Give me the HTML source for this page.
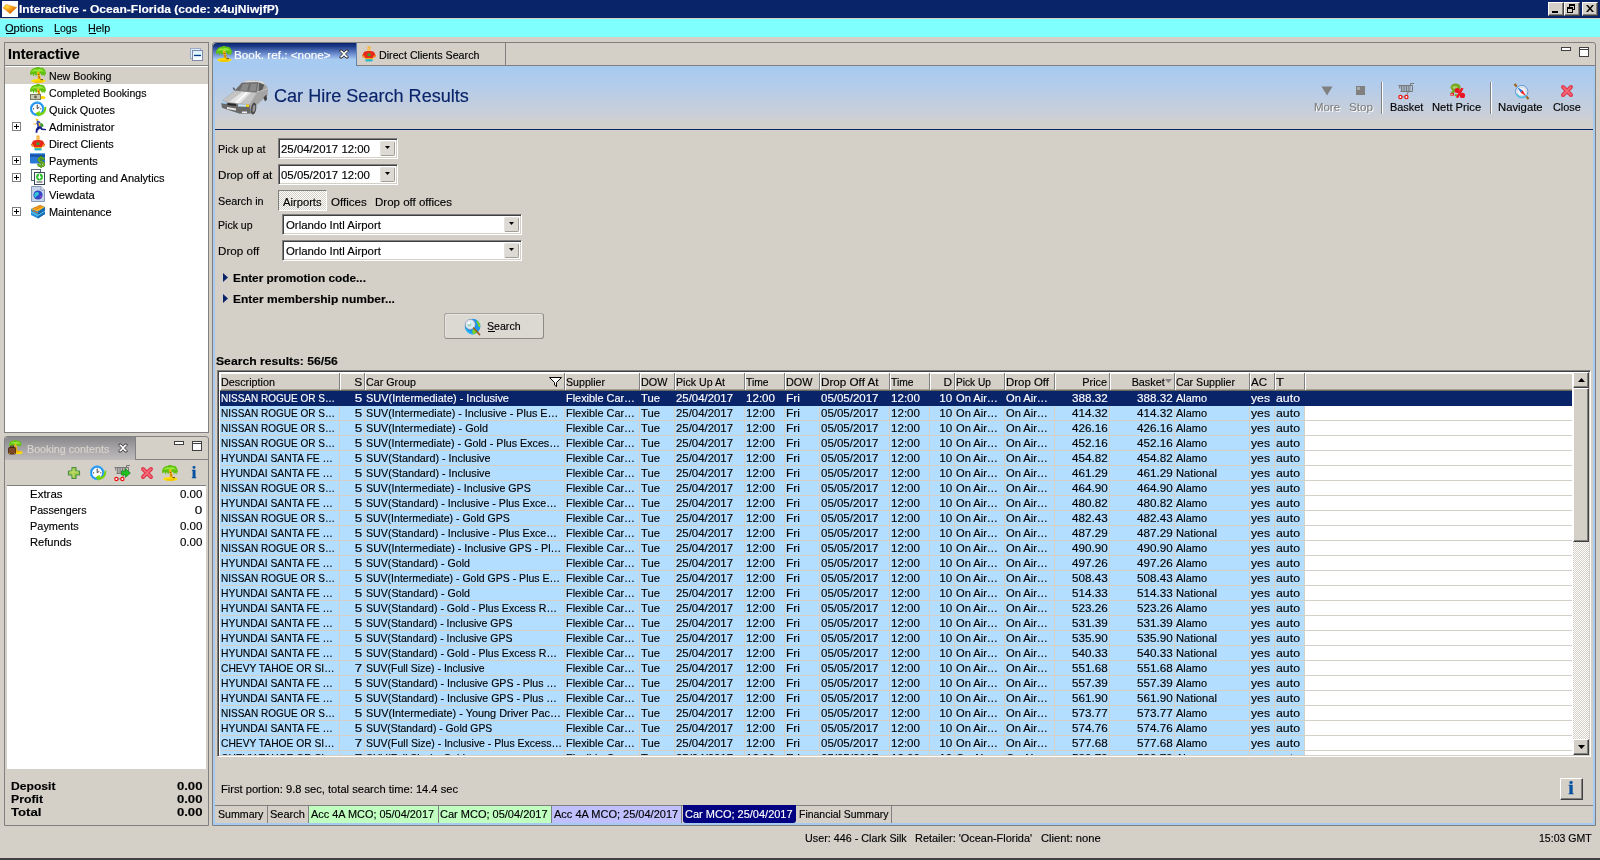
<!DOCTYPE html>
<html><head><meta charset="utf-8"><title>Interactive</title>
<style>
html,body{margin:0;padding:0}
body{width:1600px;height:860px;overflow:hidden;background:#d4d0c8;position:relative;font-family:"Liberation Sans",sans-serif;font-size:11px;color:#000}
div,span.t,svg{position:absolute;box-sizing:border-box}
span.t{white-space:pre;display:block;-webkit-text-stroke:0.15px currentColor}
u{text-decoration:underline}
.sunk{border:1px solid;border-color:#808080 #fff #fff #808080;box-shadow:inset 1px 1px 0 #404040,inset -1px -1px 0 #d4d0c8}
.rais{border:1px solid;border-color:#fff #404040 #404040 #fff;box-shadow:inset -1px -1px 0 #808080;background:#d4d0c8}
.hc{border:1px solid;border-color:#fff #808080 #808080 #fff;background:#d4d0c8}
#w{left:0;top:0;width:1600px;height:860px;will-change:transform}
</style></head><body><div id="w">
<div style="left:0px;top:0px;width:1600px;height:18px;background:#0a246a"></div>
<svg style="left:2px;top:1px" width="16" height="16" viewBox="0 0 16 16"><defs><radialGradient id="gemg" cx="0.3" cy="0.25" r="0.9"><stop offset="0" stop-color="#ffe040"/><stop offset="0.35" stop-color="#f8a818"/><stop offset="0.75" stop-color="#d86808"/><stop offset="1" stop-color="#a84404"/></radialGradient></defs><rect width="16" height="16" fill="#fff"/><path d="M1 6.9 L4 3.4 L14.7 6.4 L8.2 12.7 Z" fill="url(#gemg)" stroke="#e89020" stroke-width=".5" stroke-linejoin="round"/></svg>
<span class="t" style="left:19px;transform-origin:left;top:3px;font-size:11px;line-height:12px;font-weight:700;color:#fff;transform:scaleX(1.095);">Interactive - Ocean-Florida (code: x4ujNiwjfP)</span>
<div class="rais" style="left:1548px;top:2px;width:16px;height:14px"><div style="left:3px;top:8px;width:6px;height:2px;background:#000"></div></div>
<div class="rais" style="left:1564px;top:2px;width:16px;height:14px"><div style="left:4px;top:1px;width:6px;height:6px;border:1px solid #000;border-top-width:2px"></div><div style="left:2px;top:4px;width:6px;height:6px;border:1px solid #000;border-top-width:2px;background:#d4d0c8"></div></div>
<div class="rais" style="left:1582px;top:2px;width:16px;height:14px"><svg style="left:3px;top:2px" width="8" height="7" viewBox="0 0 8 7"><path d="M0 0 L2 0 L4 2.5 L6 0 L8 0 L5 3.5 L8 7 L6 7 L4 4.5 L2 7 L0 7 L3 3.5 Z" fill="#000"/></svg></div>
<div style="left:0px;top:18px;width:1600px;height:1px;background:#d4d0c8"></div>
<div style="left:0px;top:19px;width:1600px;height:18px;background:#80ffff"></div>
<span class="t" style="left:5px;transform-origin:left;top:22px;font-size:11px;line-height:12px;transform:scaleX(1.007);text-decoration:none">Options</span>
<span class="t" style="left:54px;transform-origin:left;top:22px;font-size:11px;line-height:12px;transform:scaleX(0.964);">Logs</span>
<span class="t" style="left:88px;transform-origin:left;top:22px;font-size:11px;line-height:12px;transform:scaleX(0.981);">Help</span>
<div style="left:6px;top:33px;width:8px;height:1px;background:#000"></div>
<div style="left:55px;top:33px;width:5px;height:1px;background:#000"></div>
<div style="left:89px;top:33px;width:7px;height:1px;background:#000"></div>
<div style="left:4px;top:42px;width:205px;height:391px;border:1px solid #808080;background:#d4d0c8"></div>
<div style="left:5px;top:65px;width:203px;height:1px;background:#808080"></div>
<div style="left:5px;top:66px;width:203px;height:366px;background:#fff"></div>
<span class="t" style="left:8px;transform-origin:left;top:47px;font-size:14px;line-height:15px;font-weight:700;transform:scaleX(1.025);">Interactive</span>
<svg style="left:190px;top:48px" width="13" height="13" viewBox="0 0 13 13"><defs><linearGradient id="cag" x1="0" y1="0" x2="0" y2="1"><stop offset="0" stop-color="#d4f2ff"/><stop offset="1" stop-color="#fff"/></linearGradient></defs><rect x="0.5" y="0.5" width="10" height="10" fill="#d8f2ff" stroke="#a0a8c8"/><rect x="2.5" y="2.5" width="10" height="10" fill="url(#cag)" stroke="#8088ac"/><rect x="4" y="6.8" width="7" height="1.3" fill="#004080"/></svg>
<div style="left:5px;top:67px;width:203px;height:17px;background:#d4d0c8"></div>
<span class="t" style="left:49px;transform-origin:left;top:70px;font-size:11px;line-height:12px;transform:scaleX(0.964);">New Booking</span>
<svg style="left:30px;top:67px" width="16" height="16" viewBox="0 0 16 16"><path d="M0 7 C0 3.2 2.8 0.8 5.4 1 C6.6 -0.3 9.6 -0.3 10.8 0.9 C13.8 0.4 16 3.2 16 7.8 L14.9 7 L14.5 9.6 L12.9 7.4 L12.1 9.2 L10.7 6.6 L9.2 7.4 L7.4 6.4 L6.1 9.4 L4.9 6.8 L3.4 9.6 L2.3 6.8 L0.7 8.4 Z" fill="#60c010"/><path d="M1.4 5.2 C2.8 2.2 5.4 1.6 7 2.8 C9 1.2 12.6 1.6 14.8 5.4 C12.6 4 10.4 4 8.8 5.2 C6.4 4 3.8 4 1.4 5.2Z" fill="#98e838"/><path d="M6.6 4.6 L9.2 5 C9.6 7.4 10.8 10 11 13.2 L7.6 13.4 C8.4 10 7.2 7.4 6.6 4.6Z" fill="#f4b810"/><path d="M7.8 7.2l1.4.6M8.4 9.8l1.6.4M8.2 12.2l2 .2" stroke="#a04c08" stroke-width="1.1"/><ellipse cx="8.4" cy="13.9" rx="7.2" ry="2" fill="#ffe000"/><ellipse cx="8.4" cy="14.8" rx="4.6" ry="1" fill="#f4c400"/><rect x="10.4" y="12.2" width="2.6" height="1" fill="#5c3c18"/></svg>
<span class="t" style="left:49px;transform-origin:left;top:87px;font-size:11px;line-height:12px;transform:scaleX(0.96);">Completed Bookings</span>
<svg style="left:30px;top:84px" width="16" height="16" viewBox="0 0 16 16"><path d="M0 7 C0 3.2 2.8 0.8 5.4 1 C6.6 -0.3 9.6 -0.3 10.8 0.9 C13.8 0.4 16 3.2 16 7.8 L14.9 7 L14.5 9.6 L12.9 7.4 L12.1 9.2 L10.7 6.6 L9.2 7.4 L7.4 6.4 L6.1 9.4 L4.9 6.8 L3.4 9.6 L2.3 6.8 L0.7 8.4 Z" fill="#60c010"/><path d="M1.4 5.2 C2.8 2.2 5.4 1.6 7 2.8 C9 1.2 12.6 1.6 14.8 5.4 C12.6 4 10.4 4 8.8 5.2 C6.4 4 3.8 4 1.4 5.2Z" fill="#98e838"/><path d="M6.6 4.6 L9.2 5 C9.6 7.4 10.8 10 11 13.2 L7.6 13.4 C8.4 10 7.2 7.4 6.6 4.6Z" fill="#f4b810"/><path d="M7.8 7.2l1.4.6M8.4 9.8l1.6.4M8.2 12.2l2 .2" stroke="#a04c08" stroke-width="1.1"/><ellipse cx="12" cy="13.5" rx="3.5" ry="1.6" fill="#ffd800"/><rect x="0.5" y="10.5" width="10" height="5" fill="#c8c8b0" stroke="#787860"/><circle cx="5.5" cy="13" r="1.4" fill="#686858"/></svg>
<span class="t" style="left:49px;transform-origin:left;top:104px;font-size:11px;line-height:12px;transform:scaleX(0.99);">Quick Quotes</span>
<svg style="left:30px;top:101px" width="17" height="17" viewBox="0 0 17 17"><circle cx="7.2" cy="7.8" r="6.2" fill="#fff" stroke="#1c8cf0" stroke-width="2.2"/><circle cx="7.2" cy="7.8" r="6.9" fill="none" stroke="#58c0f8" stroke-width=".8"/><path d="M7.2 4.2 V7.8 L9.4 6.2" stroke="#404040" stroke-width="1" fill="none"/><circle cx="3.6" cy="7.8" r=".6" fill="#222"/><circle cx="10.8" cy="7.8" r=".6" fill="#222"/><circle cx="7.2" cy="4" r=".5" fill="#222"/><path d="M16.2 5.2 C17 11 13 15 8.6 14.6 L9.4 16.6 L5.4 12.2 L10 9.8 L9.6 11.8 C12.6 12 14.4 9.6 14.4 6.4 Z" fill="#74d404"/></svg>
<span class="t" style="left:49px;transform-origin:left;top:121px;font-size:11px;line-height:12px;transform:scaleX(1.011);">Administrator</span>
<svg style="left:30px;top:118px" width="16" height="16" viewBox="0 0 16 16"><path d="M5.4 0.4 L8 1 L8.6 2.4 L6.4 3 Z" fill="#f8c818"/><path d="M3.4 5.6 L6 5.4 L6 6.6 L3.6 6.6Z" fill="#f8b020"/><path d="M7 2.6 L10 3.6 L11 8.4 L8 9.4 L6.4 5.4 Z" fill="#3048a8"/><path d="M8.4 4.4 L10 5 L10.6 8.2 L9 8.6Z" fill="#f4c024"/><path d="M10.4 4.6 L13 6 L13.6 8.2 L11 9.4Z" fill="#3c9c2c"/><path d="M7.6 8.6 L11 8.6 L12.4 10.6 L16 11 L16 12.2 L11.6 12 L10 10.4 L7.6 12.4 L7.4 14.8 L5.6 14.8 L5.8 11.6 Z" fill="#141c88"/></svg>
<div style="left:12px;top:122px;width:9px;height:9px;border:1px solid #808080;background:#fff"></div>
<div style="left:14px;top:126px;width:5px;height:1px;background:#000"></div>
<div style="left:16px;top:124px;width:1px;height:5px;background:#000"></div>
<span class="t" style="left:49px;transform-origin:left;top:138px;font-size:11px;line-height:12px;transform:scaleX(0.991);">Direct Clients</span>
<svg style="left:30px;top:135px" width="16" height="16" viewBox="0 0 16 16"><path d="M6.5 0.5 h3 v1.5 h-3z" fill="#f8b020"/><circle cx="8" cy="3.6" r="2" fill="#f8c060"/><path d="M3 6 C5 4.8 11 4.8 13 6 L15 10 L13 12 L12 10.5 L12 13 L4 13 L4 10.5 L3 12 L1 10 Z" fill="#e82818"/><path d="M1 10 L3 12 L3.8 10.8 L2.4 9Z M15 10 L13 12 L12.2 10.8 L13.6 9Z" fill="#f8a020"/><rect x="6.5" y="7.5" width="3" height="2.5" fill="#30a838"/><rect x="4.5" y="13" width="7" height="2.4" fill="#20b8c8"/><rect x="4" y="12.2" width="8" height="1" fill="#f8d020"/></svg>
<span class="t" style="left:49px;transform-origin:left;top:155px;font-size:11px;line-height:12px;transform:scaleX(0.995);">Payments</span>
<svg style="left:30px;top:152px" width="16" height="16" viewBox="0 0 16 16"><rect x="0" y="1" width="15" height="10.5" rx="1" fill="#2878d8"/><rect x="0" y="2.5" width="15" height="2.2" fill="#1850a0"/><rect x="0" y="1" width="15" height="1" fill="#60a8f0"/><text x="7.2" y="15" font-family="Liberation Sans" font-weight="700" font-size="14" fill="#78c020" stroke="#387808" stroke-width=".5">$</text></svg>
<div style="left:12px;top:156px;width:9px;height:9px;border:1px solid #808080;background:#fff"></div>
<div style="left:14px;top:160px;width:5px;height:1px;background:#000"></div>
<div style="left:16px;top:158px;width:1px;height:5px;background:#000"></div>
<span class="t" style="left:49px;transform-origin:left;top:172px;font-size:11px;line-height:12px;">Reporting and Analytics</span>
<svg style="left:30px;top:169px" width="16" height="16" viewBox="0 0 16 16"><rect x="1.5" y="0.5" width="9" height="11" fill="#fff" stroke="#586878"/><rect x="4.5" y="3.5" width="10" height="12" fill="#fff" stroke="#384858"/><circle cx="9.5" cy="8" r="3.4" fill="#28c028"/><path d="M9.5 5.3v3.2M8 7.6l1.5 1.7 1.5-1.7" stroke="#fff" stroke-width="1.1" fill="none"/><rect x="6.5" y="12.5" width="6" height="1" fill="#404040"/></svg>
<div style="left:12px;top:173px;width:9px;height:9px;border:1px solid #808080;background:#fff"></div>
<div style="left:14px;top:177px;width:5px;height:1px;background:#000"></div>
<div style="left:16px;top:175px;width:1px;height:5px;background:#000"></div>
<span class="t" style="left:49px;transform-origin:left;top:189px;font-size:11px;line-height:12px;transform:scaleX(1.014);">Viewdata</span>
<svg style="left:30px;top:186px" width="16" height="16" viewBox="0 0 16 16"><path d="M1.5 0.5 H11 L14.5 4 V15.5 H1.5Z" fill="#c8d4e8" stroke="#8898b8"/><path d="M11 0.5V4H14.5" fill="#eef2f8" stroke="#8898b8"/><circle cx="8" cy="9" r="4.6" fill="#3048c8"/><path d="M5 7 C7 5 9 6 9 8 C8 10 6 10 5 12 C4 10 4 8 5 7Z" fill="#30c8d8"/><path d="M10 9 C12 9 12.5 10.5 11 12.5 C9.5 12 9.5 10 10 9Z" fill="#8040c0"/></svg>
<span class="t" style="left:49px;transform-origin:left;top:206px;font-size:11px;line-height:12px;transform:scaleX(0.995);">Maintenance</span>
<svg style="left:30px;top:203px" width="16" height="16" viewBox="0 0 16 16"><path d="M1 6 L10 2 L15 4 L15 11 L8 15.5 L1 12 Z" fill="#2890d8"/><path d="M1 6 L10 2 L15 4 L8 8.5 Z" fill="#f8b828"/><path d="M3 5.6 L11 2.4 M5 6.6 L13 3.2 M2 7.5 L8 10" stroke="#e07010" stroke-width=".9"/><path d="M8 8.5 L15 4 L15 11 L8 15.5Z" fill="#1868b0"/><path d="M1 9 L8 12.5 L15 8" stroke="#60d0f0" stroke-width="1" fill="none"/></svg>
<div style="left:12px;top:207px;width:9px;height:9px;border:1px solid #808080;background:#fff"></div>
<div style="left:14px;top:211px;width:5px;height:1px;background:#000"></div>
<div style="left:16px;top:209px;width:1px;height:5px;background:#000"></div>
<div style="left:4px;top:436px;width:205px;height:390px;border:1px solid #808080;border-radius:3px 3px 0 0;background:#d4d0c8"></div>
<div style="left:5px;top:437px;width:131px;height:23px;background:linear-gradient(#88878a,#a3a1a4 45%,#bfbbbd);border-right:1px solid #808080;border-radius:3px 0 0 0"></div>
<div style="left:136px;top:459px;width:72px;height:1px;background:#808080"></div>
<svg style="left:8px;top:440px" width="16" height="16" viewBox="0 0 16 16"><path d="M1 5 C1 2 3.4 0.4 5.4 0.8 C6.4 -0.2 8.6 -0.2 9.6 0.8 C12 0.4 13.6 2.4 13.6 5.6 L12.6 5 L12.2 7.2 L11 5.4 L10.2 6.8 L9.2 4.8 L7.8 5.6 L6.4 4.8 L5.4 7 L4.4 5 L3.2 7 L2.4 5 L1.4 6.2Z" fill="#64c414"/><path d="M2.4 3.8 C3.8 1.8 5.6 1.6 6.6 2.4 C8.4 1.2 11 1.6 12.4 4 C10.6 3.2 9 3.2 7.6 4 C5.8 3.2 4 3.2 2.4 3.8Z" fill="#9ce83c"/><path d="M6.4 3.6 L8.2 4 C8.6 6.4 9.4 9 9.6 12 L7.2 12.2 C7.6 9 6.8 6.4 6.4 3.6Z" fill="#f4b810"/><ellipse cx="11" cy="12.6" rx="3.6" ry="1.5" fill="#ffd800"/><ellipse cx="10.6" cy="11.6" rx="2" ry=".9" fill="#f0b400"/><rect x="0.6" y="7.4" width="7" height="6.6" rx="1" fill="#7c4828" stroke="#3c1c08" stroke-width=".8"/><rect x="2.8" y="6" width="2.6" height="1.4" fill="none" stroke="#3c1c08" stroke-width=".8"/><path d="M0.8 13.4h1M6.4 13.4h1" stroke="#f0c000" stroke-width="1"/></svg>
<span class="t" style="left:27px;transform-origin:left;top:443px;font-size:11px;line-height:12px;color:#d8d4cc;transform:scaleX(0.975);">Booking contents</span>
<svg style="left:118px;top:443px" width="10" height="10" viewBox="0 0 10 10"><path d="M1 1 L3 1 L5 3.2 L7 1 L9 1 L9 2.5 L6.5 5 L9 7.5 L9 9 L7 9 L5 6.8 L3 9 L1 9 L1 7.5 L3.5 5 L1 2.5 Z" fill="#fff" stroke="#404040" stroke-width="1"/></svg>
<div style="left:174px;top:441px;width:10px;height:4px;border:1px solid #404040;background:#fff"></div>
<div style="left:192px;top:441px;width:10px;height:10px;border:1px solid #404040;background:#fff"><div style="left:0;top:1px;width:8px;height:1px;background:#404040"></div></div>
<div style="left:7px;top:485px;width:199px;height:1px;background:#808080"></div>
<svg style="left:66px;top:465px" width="16" height="16" viewBox="0 0 16 16"><path d="M6 2.5 H10 V6 H13.5 V10 H10 V13.5 H6 V10 H2.5 V6 H6 Z" fill="#a4cc4c" stroke="#4c9048" stroke-width="1.2" stroke-linejoin="round"/><path d="M7 4v8M4 7h8" stroke="#c4e070" stroke-width="1"/></svg>
<svg style="left:90px;top:465px" width="17" height="17" viewBox="0 0 17 17"><circle cx="7.2" cy="7.8" r="6.2" fill="#fff" stroke="#1c8cf0" stroke-width="2.2"/><circle cx="7.2" cy="7.8" r="6.9" fill="none" stroke="#58c0f8" stroke-width=".8"/><path d="M7.2 4.2 V7.8 L9.4 6.2" stroke="#404040" stroke-width="1" fill="none"/><circle cx="3.6" cy="7.8" r=".6" fill="#222"/><circle cx="10.8" cy="7.8" r=".6" fill="#222"/><circle cx="7.2" cy="4" r=".5" fill="#222"/><path d="M16.2 5.2 C17 11 13 15 8.6 14.6 L9.4 16.6 L5.4 12.2 L10 9.8 L9.6 11.8 C12.6 12 14.4 9.6 14.4 6.4 Z" fill="#74d404"/></svg>
<svg style="left:114px;top:465px" width="17" height="17" viewBox="0 0 17 17"><path d="M0.5 2.5 H14.5 V8.5 H2.5" fill="none" stroke="#787878" stroke-width="1"/><path d="M1.7 3v2.5M3.4 3v5M5.1 3v5M6.8 3v5M8.5 3v5M10.2 3v5M11.9 3v5" stroke="#787878" stroke-width="1"/><path d="M12.5 2.5 V0.5 H16" stroke="#787878" fill="none"/><path d="M10.5 8.5 L9 11.5 L8 12.5" stroke="#787878" fill="none"/><path d="M3 13.9H8" stroke="#787878"/><circle cx="2.4" cy="14" r="1.6" fill="#fff" stroke="#f01010" stroke-width="1.2"/><circle cx="8.4" cy="14" r="1.6" fill="#fff" stroke="#f01010" stroke-width="1.2"/><path d="M7.5 6 H11.5 V3.6 L16.4 8 L11.5 12.4 V10 H7.5 Z" fill="#20c020" stroke="#108810" stroke-width=".7"/></svg>
<svg style="left:138.5px;top:465px" width="16" height="16" viewBox="0 0 16 16"><path d="M4 4 L12 12 M12 4 L4 12" stroke="#e03448" stroke-width="3.9" stroke-linecap="round"/><path d="M4.2 4.2 L11.8 11.8 M11.8 4.2 L4.2 11.8" stroke="#f26a78" stroke-width="1.8" stroke-linecap="round"/></svg>
<svg style="left:162px;top:465px" width="16" height="16" viewBox="0 0 16 16"><path d="M0 7 C0 3.2 2.8 0.8 5.4 1 C6.6 -0.3 9.6 -0.3 10.8 0.9 C13.8 0.4 16 3.2 16 7.8 L14.9 7 L14.5 9.6 L12.9 7.4 L12.1 9.2 L10.7 6.6 L9.2 7.4 L7.4 6.4 L6.1 9.4 L4.9 6.8 L3.4 9.6 L2.3 6.8 L0.7 8.4 Z" fill="#60c010"/><path d="M1.4 5.2 C2.8 2.2 5.4 1.6 7 2.8 C9 1.2 12.6 1.6 14.8 5.4 C12.6 4 10.4 4 8.8 5.2 C6.4 4 3.8 4 1.4 5.2Z" fill="#98e838"/><path d="M6.6 4.6 L9.2 5 C9.6 7.4 10.8 10 11 13.2 L7.6 13.4 C8.4 10 7.2 7.4 6.6 4.6Z" fill="#f4b810"/><path d="M7.8 7.2l1.4.6M8.4 9.8l1.6.4M8.2 12.2l2 .2" stroke="#a04c08" stroke-width="1.1"/><ellipse cx="8.4" cy="13.9" rx="7.2" ry="2" fill="#ffe000"/><ellipse cx="8.4" cy="14.8" rx="4.6" ry="1" fill="#f4c400"/><rect x="10.4" y="12.2" width="2.6" height="1" fill="#5c3c18"/></svg>
<svg style="left:188px;top:464px" width="12" height="16" viewBox="0 0 12 16"><text x="6" y="14" text-anchor="middle" font-family="Liberation Serif" font-weight="700" font-size="16" fill="#0850a0" stroke="#0850a0" stroke-width=".5">i</text></svg>
<div style="left:7px;top:486px;width:199px;height:283px;background:#fff"></div>
<span class="t" style="left:30px;transform-origin:left;top:488px;font-size:11px;line-height:12px;transform:scaleX(1.042);">Extras</span>
<span class="t" style="right:1398px;transform-origin:right;top:488px;font-size:11px;line-height:12px;transform:scaleX(1.05);">0.00</span>
<span class="t" style="left:30px;transform-origin:left;top:504px;font-size:11px;line-height:12px;transform:scaleX(0.973);">Passengers</span>
<span class="t" style="right:1398px;transform-origin:right;top:504px;font-size:11px;line-height:12px;transform:scaleX(1.224);">0</span>
<span class="t" style="left:30px;transform-origin:left;top:520px;font-size:11px;line-height:12px;transform:scaleX(0.995);">Payments</span>
<span class="t" style="right:1398px;transform-origin:right;top:520px;font-size:11px;line-height:12px;transform:scaleX(1.05);">0.00</span>
<span class="t" style="left:30px;transform-origin:left;top:536px;font-size:11px;line-height:12px;transform:scaleX(1.013);">Refunds</span>
<span class="t" style="right:1398px;transform-origin:right;top:536px;font-size:11px;line-height:12px;transform:scaleX(1.05);">0.00</span>
<span class="t" style="left:11px;transform-origin:left;top:780px;font-size:11px;line-height:12px;font-weight:700;transform:scaleX(1.103);">Deposit</span>
<span class="t" style="right:1398px;transform-origin:right;top:780px;font-size:11px;line-height:12px;font-weight:700;transform:scaleX(1.19);">0.00</span>
<span class="t" style="left:11px;transform-origin:left;top:793px;font-size:11px;line-height:12px;font-weight:700;transform:scaleX(1.114);">Profit</span>
<span class="t" style="right:1398px;transform-origin:right;top:793px;font-size:11px;line-height:12px;font-weight:700;transform:scaleX(1.19);">0.00</span>
<span class="t" style="left:11px;transform-origin:left;top:806px;font-size:11px;line-height:12px;font-weight:700;transform:scaleX(1.198);">Total</span>
<span class="t" style="right:1398px;transform-origin:right;top:806px;font-size:11px;line-height:12px;font-weight:700;transform:scaleX(1.19);">0.00</span>
<div style="left:212px;top:42px;width:1384px;height:784px;border:1px solid #808080;border-radius:3px 3px 0 0;background:#d4d0c8"></div>
<div style="left:213px;top:65px;width:1382px;height:760px;border:2px solid #a6caf0;border-top:0;background:#d4d0c8"></div>
<div style="left:356px;top:65px;width:1239px;height:1px;background:#808080"></div>
<div style="left:213px;top:43px;width:144px;height:23px;background:linear-gradient(#0a246a,#1c3c88 15%,#4868b0 32%,#7898d8 52%,#a6caf0 72%,#a6caf0);border-radius:4px 0 0 0;border-right:1px solid #6080b0"></div>
<svg style="left:216px;top:46px" width="16" height="16" viewBox="0 0 16 16"><path d="M0 7 C0 3.2 2.8 0.8 5.4 1 C6.6 -0.3 9.6 -0.3 10.8 0.9 C13.8 0.4 16 3.2 16 7.8 L14.9 7 L14.5 9.6 L12.9 7.4 L12.1 9.2 L10.7 6.6 L9.2 7.4 L7.4 6.4 L6.1 9.4 L4.9 6.8 L3.4 9.6 L2.3 6.8 L0.7 8.4 Z" fill="#60c010"/><path d="M1.4 5.2 C2.8 2.2 5.4 1.6 7 2.8 C9 1.2 12.6 1.6 14.8 5.4 C12.6 4 10.4 4 8.8 5.2 C6.4 4 3.8 4 1.4 5.2Z" fill="#98e838"/><path d="M6.6 4.6 L9.2 5 C9.6 7.4 10.8 10 11 13.2 L7.6 13.4 C8.4 10 7.2 7.4 6.6 4.6Z" fill="#f4b810"/><path d="M7.8 7.2l1.4.6M8.4 9.8l1.6.4M8.2 12.2l2 .2" stroke="#a04c08" stroke-width="1.1"/><ellipse cx="8.4" cy="13.9" rx="7.2" ry="2" fill="#ffe000"/><ellipse cx="8.4" cy="14.8" rx="4.6" ry="1" fill="#f4c400"/><rect x="10.4" y="12.2" width="2.6" height="1" fill="#5c3c18"/></svg>
<span class="t" style="left:234px;transform-origin:left;top:49px;font-size:11px;line-height:12px;color:#fff;transform:scaleX(1.067);">Book. ref.: &lt;none&gt;</span>
<svg style="left:339px;top:49px" width="10" height="10" viewBox="0 0 10 10"><path d="M1 1 L3 1 L5 3.2 L7 1 L9 1 L9 2.5 L6.5 5 L9 7.5 L9 9 L7 9 L5 6.8 L3 9 L1 9 L1 7.5 L3.5 5 L1 2.5 Z" fill="#fff" stroke="#303030" stroke-width="1"/></svg>
<svg style="left:361px;top:46px" width="16" height="16" viewBox="0 0 16 16"><path d="M6.5 0.5 h3 v1.5 h-3z" fill="#f8b020"/><circle cx="8" cy="3.6" r="2" fill="#f8c060"/><path d="M3 6 C5 4.8 11 4.8 13 6 L15 10 L13 12 L12 10.5 L12 13 L4 13 L4 10.5 L3 12 L1 10 Z" fill="#e82818"/><path d="M1 10 L3 12 L3.8 10.8 L2.4 9Z M15 10 L13 12 L12.2 10.8 L13.6 9Z" fill="#f8a020"/><rect x="6.5" y="7.5" width="3" height="2.5" fill="#30a838"/><rect x="4.5" y="13" width="7" height="2.4" fill="#20b8c8"/><rect x="4" y="12.2" width="8" height="1" fill="#f8d020"/></svg>
<span class="t" style="left:379px;transform-origin:left;top:49px;font-size:11px;line-height:12px;transform:scaleX(0.972);">Direct Clients Search</span>
<div style="left:505px;top:43px;width:1px;height:22px;background:#808080"></div>
<div style="left:1561px;top:47px;width:10px;height:4px;border:1px solid #404040;background:#fff"></div>
<div style="left:1579px;top:47px;width:10px;height:10px;border:1px solid #404040;background:#fff"><div style="left:0;top:1px;width:8px;height:1px;background:#404040"></div></div>
<div style="left:215px;top:66px;width:1378px;height:63px;background:linear-gradient(#a6caf0,#b3cceb 30%,#c9cfd9 75%,#d4d0c8)"></div>
<div style="left:215px;top:129px;width:1378px;height:1px;background:#0a246a"></div>
<svg style="left:221px;top:80px" width="48" height="36" viewBox="0 0 48 36"><path d="M0.4 23.3 L1.7 20 L13.8 10.5 L20.9 2.8 L27.3 0.2 L41.3 1.2 L44.5 4.7 L47.1 8.5 L46.5 15.6 L35 25.8 L32.4 34 L29.8 33.5 L18.3 33.5 L1 27.7 Z" fill="#a4a4a4"/><path d="M27.3 0.2 L41.3 1.2 L44.5 4.7 L37.5 2.2 L20.9 2.8Z" fill="#dcdcdc"/><path d="M20.9 2.8 L37.5 2.2 L35.6 12.4 L13.8 10.5Z" fill="#6c6c6c"/><path d="M22 4 L28 3.8 L26 11 L19 10.4Z M30 3.8 L36 3.6 L34.6 11.6 L28 11Z" fill="#8a8a8a"/><path d="M38.1 2.8 L43.3 4.7 L41.3 9.8 L37.5 11.7Z" fill="#585858"/><path d="M13.8 11.1 L35.6 13 L28.5 24.5 L6.8 22 L1.7 20Z" fill="#c4c4c4"/><path d="M21 12 L30 12.6 L19 23.4 L8 22Z" fill="#e4e4e4"/><path d="M25 12.3 L27 12.4 L16 23 L14 22.8Z" fill="#fff"/><path d="M0.4 23.3 L28.5 24.9 L29.8 33.5 L18.3 33.5 L1 27.7Z" fill="#686868"/><path d="M1 20.5 L5.5 22 L5.5 24 L1 23.2Z" fill="#a8d0f0"/><path d="M17 24.2 L25 24.6 L25 26.8 L17 26.4Z" fill="#c8e4f8"/><path d="M25 24.4 L28 24.6 L28 27 L25 26.8Z" fill="#f8d010"/><path d="M6.5 23 L15 23.8 L15 26 L6.5 25Z" fill="#282828"/><path d="M6 27 L15 28.5 L15 30.6 L6 29Z" fill="#e8e8e8"/><path d="M21 31.5 h5 v1.6 h-5z" fill="#f0f0f0"/><ellipse cx="32.6" cy="28.6" rx="2.6" ry="6" fill="#484848" transform="rotate(8 32.6 28.6)"/><ellipse cx="32.9" cy="28.6" rx="1.3" ry="3.6" fill="#989898" transform="rotate(8 32.9 28.6)"/><path d="M42.5 17.5 L45.5 14.5 L46 19.5 L44 21.5Z" fill="#404040"/><path d="M11.6 7.8 L13 7.6 L14.2 10 L13.2 10.4Z" fill="#484848"/><path d="M35.6 12.4 L47.1 8.5" stroke="#c8c8c8" stroke-width=".8"/></svg>
<span class="t" style="left:274px;transform-origin:left;top:87px;font-size:18px;line-height:19px;color:#0a246a;transform:scaleX(1.004);">Car Hire Search Results</span>
<svg style="left:1321px;top:86px" width="12" height="10" viewBox="0 0 12 10"><path d="M0.5 0.5 H11.5 L6 9.5Z" fill="#808080"/></svg>
<svg style="left:1356px;top:86px" width="9" height="9" viewBox="0 0 9 9"><rect width="9" height="9" fill="#808080"/><rect x="1" y="1" width="3" height="3" fill="#a8a8a8"/></svg>
<span class="t" style="left:1314px;transform-origin:left;top:101px;font-size:11px;line-height:12px;color:#808080;transform:scaleX(1.037);text-shadow:1px 1px 0 #fff;">More</span>
<span class="t" style="left:1349px;transform-origin:left;top:101px;font-size:11px;line-height:12px;color:#808080;transform:scaleX(1.06);text-shadow:1px 1px 0 #fff;">Stop</span>
<div style="left:1381px;top:82px;width:2px;height:32px;border-left:1px solid #808080;border-right:1px solid #fff"></div>
<svg style="left:1398px;top:83px" width="17" height="17" viewBox="0 0 17 17"><path d="M0.5 2.5 H14.5 V8.5 H2.5" fill="none" stroke="#787878" stroke-width="1"/><path d="M1.7 3v2.5M3.4 3v5M5.1 3v5M6.8 3v5M8.5 3v5M10.2 3v5M11.9 3v5" stroke="#787878" stroke-width="1"/><path d="M12.5 2.5 V0.5 H16" stroke="#787878" fill="none"/><path d="M10.5 8.5 L9 11.5 L8 12.5" stroke="#787878" fill="none"/><path d="M3 13.9H8" stroke="#787878"/><circle cx="2.4" cy="14" r="1.6" fill="#fff" stroke="#f01010" stroke-width="1.2"/><circle cx="8.4" cy="14" r="1.6" fill="#fff" stroke="#f01010" stroke-width="1.2"/></svg>
<span class="t" style="left:1390px;transform-origin:left;top:101px;font-size:11px;line-height:12px;transform:scaleX(0.993);">Basket</span>
<svg style="left:1449px;top:83px" width="17" height="16" viewBox="0 0 17 16"><ellipse cx="6.6" cy="4.2" rx="5" ry="3.8" fill="#78a820"/><ellipse cx="6" cy="4.4" rx="2.6" ry="1.4" fill="#a8cc68"/><path d="M3.4 6.6 C3.4 9 2 10 0.6 10 L4.4 11 L6.6 8Z" fill="#78a820"/><path d="M6 11 L8.4 11.4 L7.6 13.6 L5.6 13Z" fill="#78a820"/><rect x="1.4" y="10.2" width="3.6" height="2.4" fill="#f01420"/><rect x="2" y="11" width="1.8" height="0.8" fill="#fff" fill-opacity=".8"/><circle cx="8.2" cy="7.6" r="2.5" fill="#f01420"/><circle cx="13.4" cy="12.4" r="2.7" fill="#f01420"/><path d="M12.2 4.8 L14.6 5.4 L9.2 15 L6.8 14.6Z" fill="#f01420"/><circle cx="8.2" cy="7.6" r=".8" fill="#c02838"/><circle cx="13.4" cy="12.4" r=".8" fill="#c02838"/></svg>
<span class="t" style="left:1432px;transform-origin:left;top:101px;font-size:11px;line-height:12px;transform:scaleX(1.017);">Nett Price</span>
<div style="left:1490px;top:82px;width:2px;height:32px;border-left:1px solid #808080;border-right:1px solid #fff"></div>
<svg style="left:1513px;top:83px" width="17" height="17" viewBox="0 0 17 17"><path d="M0.6 1.6 L2.6 0.2 L4.4 3 L2.8 4.2Z M16.4 15.4 L14.6 16.8 L12.6 14 L14.2 12.8Z" fill="#9c6420"/><circle cx="8.7" cy="8.6" r="6.2" fill="#f0f2f6" stroke="#5c94d4" stroke-width="1"/><path d="M3.4 11.6 A6.2 6.2 0 0 0 13.6 12.4 L12.6 11.2 A4.8 4.8 0 0 1 4.6 10.6Z" fill="#40c8e8"/><circle cx="8.7" cy="8.6" r="4.6" fill="none" stroke="#d0d4dc" stroke-width="1"/><path d="M4.2 4.2 L9.8 7.6 L7.8 9.6Z" fill="#1c74e0"/><path d="M12.8 13 L7.6 9.4 L9.8 7.4Z" fill="#f01c1c"/></svg>
<span class="t" style="left:1498px;transform-origin:left;top:101px;font-size:11px;line-height:12px;transform:scaleX(1.027);">Navigate</span>
<svg style="left:1559px;top:83px" width="16" height="16" viewBox="0 0 16 16"><path d="M4 4 L12 12 M12 4 L4 12" stroke="#e03448" stroke-width="3.9" stroke-linecap="round"/><path d="M4.2 4.2 L11.8 11.8 M11.8 4.2 L4.2 11.8" stroke="#f26a78" stroke-width="1.8" stroke-linecap="round"/></svg>
<span class="t" style="left:1553px;transform-origin:left;top:101px;font-size:11px;line-height:12px;transform:scaleX(0.988);">Close</span>
<span class="t" style="left:218px;transform-origin:left;top:143px;font-size:11px;line-height:12px;transform:scaleX(0.985);">Pick up at</span>
<span class="t" style="left:218px;transform-origin:left;top:169px;font-size:11px;line-height:12px;transform:scaleX(1.059);">Drop off at</span>
<span class="t" style="left:218px;transform-origin:left;top:195px;font-size:11px;line-height:12px;transform:scaleX(0.981);">Search in</span>
<span class="t" style="left:218px;transform-origin:left;top:219px;font-size:11px;line-height:12px;transform:scaleX(0.959);">Pick up</span>
<span class="t" style="left:218px;transform-origin:left;top:245px;font-size:11px;line-height:12px;transform:scaleX(1.058);">Drop off</span>
<div class="sunk" style="left:278px;top:138px;width:120px;height:21px;background:#fff"></div>
<span class="t" style="left:281px;transform-origin:left;top:143px;font-size:11px;line-height:12px;transform:scaleX(1.039);">25/04/2017 12:00</span>
<div style="left:380px;top:141px;width:15px;height:15px;border:1px solid;border-color:#e4e1dc #a29e96 #a29e96 #e4e1dc;border-radius:2px;background:#dddad4"><svg style="left:4px;top:4px" width="5" height="3" viewBox="0 0 5 3"><path d="M0 0H5L2.5 3Z" fill="#000"/></svg></div>
<div class="sunk" style="left:278px;top:164px;width:120px;height:21px;background:#fff"></div>
<span class="t" style="left:281px;transform-origin:left;top:169px;font-size:11px;line-height:12px;transform:scaleX(1.039);">05/05/2017 12:00</span>
<div style="left:380px;top:167px;width:15px;height:15px;border:1px solid;border-color:#e4e1dc #a29e96 #a29e96 #e4e1dc;border-radius:2px;background:#dddad4"><svg style="left:4px;top:4px" width="5" height="3" viewBox="0 0 5 3"><path d="M0 0H5L2.5 3Z" fill="#000"/></svg></div>
<div style="left:278px;top:190px;width:49px;height:21px;border:1px solid;border-color:#808080 #fff #fff #808080;background:repeating-conic-gradient(#fff 0% 25%,#d4d0c8 0% 50%) 0 0/2px 2px"></div>
<span class="t" style="left:283px;transform-origin:left;top:196px;font-size:11px;line-height:12px;transform:scaleX(1.018);">Airports</span>
<span class="t" style="left:331px;transform-origin:left;top:196px;font-size:11px;line-height:12px;transform:scaleX(1.052);">Offices</span>
<span class="t" style="left:375px;transform-origin:left;top:196px;font-size:11px;line-height:12px;transform:scaleX(1.046);">Drop off offices</span>
<div class="sunk" style="left:282px;top:214px;width:240px;height:21px;background:#fff"></div>
<span class="t" style="left:286px;transform-origin:left;top:219px;font-size:11px;line-height:12px;transform:scaleX(1.034);">Orlando Intl Airport</span>
<div style="left:504px;top:217px;width:15px;height:15px;border:1px solid;border-color:#e4e1dc #a29e96 #a29e96 #e4e1dc;border-radius:2px;background:#dddad4"><svg style="left:4px;top:4px" width="5" height="3" viewBox="0 0 5 3"><path d="M0 0H5L2.5 3Z" fill="#000"/></svg></div>
<div class="sunk" style="left:282px;top:240px;width:240px;height:21px;background:#fff"></div>
<span class="t" style="left:286px;transform-origin:left;top:245px;font-size:11px;line-height:12px;transform:scaleX(1.034);">Orlando Intl Airport</span>
<div style="left:504px;top:243px;width:15px;height:15px;border:1px solid;border-color:#e4e1dc #a29e96 #a29e96 #e4e1dc;border-radius:2px;background:#dddad4"><svg style="left:4px;top:4px" width="5" height="3" viewBox="0 0 5 3"><path d="M0 0H5L2.5 3Z" fill="#000"/></svg></div>
<svg style="left:223px;top:273px" width="5" height="9" viewBox="0 0 5 9"><path d="M0 0L5 4.5L0 9Z" fill="#0a246a"/></svg>
<span class="t" style="left:233px;transform-origin:left;top:272px;font-size:11px;line-height:12px;font-weight:700;transform:scaleX(1.077);">Enter promotion code...</span>
<svg style="left:223px;top:294px" width="5" height="9" viewBox="0 0 5 9"><path d="M0 0L5 4.5L0 9Z" fill="#0a246a"/></svg>
<span class="t" style="left:233px;transform-origin:left;top:293px;font-size:11px;line-height:12px;font-weight:700;transform:scaleX(1.09);">Enter membership number...</span>
<div style="left:444px;top:313px;width:100px;height:26px;border:1px solid;border-color:#a8a49e #8e8a84 #8e8a84 #a8a49e;border-radius:3px;background:#dcd9d3;box-shadow:inset 1px 1px 0 #e8e5e0"></div>
<svg style="left:464px;top:318px" width="18" height="18" viewBox="0 0 18 18"><circle cx="8.6" cy="8.6" r="7.8" fill="#1c94f0"/><path d="M12.4 2.6 C15 3.6 16.6 6.6 16.2 9 C15 9.6 13.6 8.4 13.8 6.6 C13.2 5.2 12.2 4 12.4 2.6Z M9 11.4 C11 10.6 13 11.6 13.4 13.6 C12.4 15.2 10.6 16.2 9 16.2 C8.2 14.6 8.2 12.6 9 11.4Z" fill="#78d820"/><path d="M2 11 C3.4 13.6 5.4 15.4 8 16" stroke="#30c0f8" stroke-width="1.2" fill="none"/><circle cx="6.2" cy="6.4" r="4.3" fill="#d8ecf8" stroke="#e8e8ec" stroke-width="1.5"/><circle cx="6.2" cy="6.4" r="5" fill="none" stroke="#7888a0" stroke-width=".6"/><circle cx="5.4" cy="6.8" r="2" fill="#90d0a0" fill-opacity=".7"/><circle cx="5" cy="5" r="1.2" fill="#fff"/><path d="M9.6 10 L15.6 16.6" stroke="#a05c20" stroke-width="1.6" stroke-linecap="round"/></svg>
<span class="t" style="left:487px;transform-origin:left;top:320px;font-size:11px;line-height:12px;transform:scaleX(0.964);">Search</span>
<div style="left:488px;top:331px;width:7px;height:1px;background:#000"></div>
<span class="t" style="left:216px;transform-origin:left;top:355px;font-size:11px;line-height:12px;font-weight:700;transform:scaleX(1.106);">Search results: 56/56</span>
<div class="sunk" style="left:217px;top:370px;width:1374px;height:387px;background:#fff"></div>
<div style="left:219px;top:372px;width:1353px;height:19px;background:#d4d0c8;border-top:2px solid #fff;border-left:2px solid #fff;border-bottom:1px solid #6a685e;box-shadow:inset 0 -1px 0 #a39f93"></div>
<div style="left:220px;top:373px;width:120px;height:17px;border-right:1px solid #808080"></div>
<span class="t" style="left:221px;transform-origin:left;top:376px;font-size:11px;line-height:12px;transform:scaleX(0.981);">Description</span>
<div style="left:340px;top:373px;width:25px;height:17px;border-left:1px solid #fff;border-right:1px solid #808080"></div>
<span class="t" style="right:1238px;transform-origin:right;top:376px;font-size:11px;line-height:12px;transform:scaleX(1.089);">S</span>
<div style="left:365px;top:373px;width:200px;height:17px;border-left:1px solid #fff;border-right:1px solid #808080"></div>
<span class="t" style="left:366px;transform-origin:left;top:376px;font-size:11px;line-height:12px;transform:scaleX(0.974);">Car Group</span>
<div style="left:565px;top:373px;width:75px;height:17px;border-left:1px solid #fff;border-right:1px solid #808080"></div>
<span class="t" style="left:566px;transform-origin:left;top:376px;font-size:11px;line-height:12px;transform:scaleX(0.966);">Supplier</span>
<div style="left:640px;top:373px;width:35px;height:17px;border-left:1px solid #fff;border-right:1px solid #808080"></div>
<span class="t" style="left:641px;transform-origin:left;top:376px;font-size:11px;line-height:12px;transform:scaleX(0.985);">DOW</span>
<div style="left:675px;top:373px;width:70px;height:17px;border-left:1px solid #fff;border-right:1px solid #808080"></div>
<span class="t" style="left:676px;transform-origin:left;top:376px;font-size:11px;line-height:12px;transform:scaleX(0.966);">Pick Up At</span>
<div style="left:745px;top:373px;width:40px;height:17px;border-left:1px solid #fff;border-right:1px solid #808080"></div>
<span class="t" style="left:746px;transform-origin:left;top:376px;font-size:11px;line-height:12px;transform:scaleX(0.936);">Time</span>
<div style="left:785px;top:373px;width:35px;height:17px;border-left:1px solid #fff;border-right:1px solid #808080"></div>
<span class="t" style="left:786px;transform-origin:left;top:376px;font-size:11px;line-height:12px;transform:scaleX(0.985);">DOW</span>
<div style="left:820px;top:373px;width:70px;height:17px;border-left:1px solid #fff;border-right:1px solid #808080"></div>
<span class="t" style="left:821px;transform-origin:left;top:376px;font-size:11px;line-height:12px;transform:scaleX(1.061);">Drop Off At</span>
<div style="left:890px;top:373px;width:40px;height:17px;border-left:1px solid #fff;border-right:1px solid #808080"></div>
<span class="t" style="left:891px;transform-origin:left;top:376px;font-size:11px;line-height:12px;transform:scaleX(0.936);">Time</span>
<div style="left:930px;top:373px;width:25px;height:17px;border-left:1px solid #fff;border-right:1px solid #808080"></div>
<span class="t" style="right:648px;transform-origin:right;top:376px;font-size:11px;line-height:12px;transform:scaleX(1.069);">D</span>
<div style="left:955px;top:373px;width:50px;height:17px;border-left:1px solid #fff;border-right:1px solid #808080"></div>
<span class="t" style="left:956px;transform-origin:left;top:376px;font-size:11px;line-height:12px;transform:scaleX(0.923);">Pick Up</span>
<div style="left:1005px;top:373px;width:50px;height:17px;border-left:1px solid #fff;border-right:1px solid #808080"></div>
<span class="t" style="left:1006px;transform-origin:left;top:376px;font-size:11px;line-height:12px;transform:scaleX(1.039);">Drop Off</span>
<div style="left:1055px;top:373px;width:55px;height:17px;border-left:1px solid #fff;border-right:1px solid #808080"></div>
<span class="t" style="right:493px;transform-origin:right;top:376px;font-size:11px;line-height:12px;transform:scaleX(0.988);">Price</span>
<div style="left:1110px;top:373px;width:65px;height:17px;border-left:1px solid #fff;border-right:1px solid #808080"></div>
<span class="t" style="right:435px;transform-origin:right;top:376px;font-size:11px;line-height:12px;transform:scaleX(0.981);">Basket</span>
<svg style="left:1165px;top:379px" width="7" height="4" viewBox="0 0 7 4"><path d="M0 0H7L3.5 4Z" fill="#808080"/></svg>
<div style="left:1175px;top:373px;width:75px;height:17px;border-left:1px solid #fff;border-right:1px solid #808080"></div>
<span class="t" style="left:1176px;transform-origin:left;top:376px;font-size:11px;line-height:12px;transform:scaleX(0.965);">Car Supplier</span>
<div style="left:1250px;top:373px;width:25px;height:17px;border-left:1px solid #fff;border-right:1px solid #808080"></div>
<span class="t" style="left:1251px;transform-origin:left;top:376px;font-size:11px;line-height:12px;transform:scaleX(1.047);">AC</span>
<div style="left:1275px;top:373px;width:30px;height:17px;border-left:1px solid #fff;border-right:1px solid #808080"></div>
<span class="t" style="left:1276px;transform-origin:left;top:376px;font-size:11px;line-height:12px;transform:scaleX(1.188);">T</span>
<div style="left:1305px;top:373px;width:1px;height:17px;background:#fff"></div>
<svg style="left:549px;top:377px" width="13" height="10" viewBox="0 0 13 10"><path d="M0.5 0.5 H12.5 L7.5 5.5 V9.5 L5.5 8 V5.5 Z" fill="#fff" stroke="#000" stroke-width="1"/></svg>
<div style="left:219px;top:391px;width:1353px;height:364px;overflow:hidden;background:#fff">
<div style="left:1px;top:0;width:1085px;height:364px;background:#b4deff"></div>
<div style="left:1px;top:0;width:1352px;height:15px;background:#0a246a"></div>
<div style="left:1px;top:29px;width:1352px;height:1px;background:#d4d0c8"></div>
<div style="left:1px;top:44px;width:1352px;height:1px;background:#d4d0c8"></div>
<div style="left:1px;top:59px;width:1352px;height:1px;background:#d4d0c8"></div>
<div style="left:1px;top:74px;width:1352px;height:1px;background:#d4d0c8"></div>
<div style="left:1px;top:89px;width:1352px;height:1px;background:#d4d0c8"></div>
<div style="left:1px;top:104px;width:1352px;height:1px;background:#d4d0c8"></div>
<div style="left:1px;top:119px;width:1352px;height:1px;background:#d4d0c8"></div>
<div style="left:1px;top:134px;width:1352px;height:1px;background:#d4d0c8"></div>
<div style="left:1px;top:149px;width:1352px;height:1px;background:#d4d0c8"></div>
<div style="left:1px;top:164px;width:1352px;height:1px;background:#d4d0c8"></div>
<div style="left:1px;top:179px;width:1352px;height:1px;background:#d4d0c8"></div>
<div style="left:1px;top:194px;width:1352px;height:1px;background:#d4d0c8"></div>
<div style="left:1px;top:209px;width:1352px;height:1px;background:#d4d0c8"></div>
<div style="left:1px;top:224px;width:1352px;height:1px;background:#d4d0c8"></div>
<div style="left:1px;top:239px;width:1352px;height:1px;background:#d4d0c8"></div>
<div style="left:1px;top:254px;width:1352px;height:1px;background:#d4d0c8"></div>
<div style="left:1px;top:269px;width:1352px;height:1px;background:#d4d0c8"></div>
<div style="left:1px;top:284px;width:1352px;height:1px;background:#d4d0c8"></div>
<div style="left:1px;top:299px;width:1352px;height:1px;background:#d4d0c8"></div>
<div style="left:1px;top:314px;width:1352px;height:1px;background:#d4d0c8"></div>
<div style="left:1px;top:329px;width:1352px;height:1px;background:#d4d0c8"></div>
<div style="left:1px;top:344px;width:1352px;height:1px;background:#d4d0c8"></div>
<div style="left:1px;top:359px;width:1352px;height:1px;background:#d4d0c8"></div>
<div style="left:1px;top:374px;width:1352px;height:1px;background:#d4d0c8"></div>
<div style="left:120px;top:15px;width:1px;height:349px;background:#d4d0c8"></div>
<div style="left:145px;top:15px;width:1px;height:349px;background:#d4d0c8"></div>
<div style="left:345px;top:15px;width:1px;height:349px;background:#d4d0c8"></div>
<div style="left:420px;top:15px;width:1px;height:349px;background:#d4d0c8"></div>
<div style="left:455px;top:15px;width:1px;height:349px;background:#d4d0c8"></div>
<div style="left:525px;top:15px;width:1px;height:349px;background:#d4d0c8"></div>
<div style="left:565px;top:15px;width:1px;height:349px;background:#d4d0c8"></div>
<div style="left:600px;top:15px;width:1px;height:349px;background:#d4d0c8"></div>
<div style="left:670px;top:15px;width:1px;height:349px;background:#d4d0c8"></div>
<div style="left:710px;top:15px;width:1px;height:349px;background:#d4d0c8"></div>
<div style="left:735px;top:15px;width:1px;height:349px;background:#d4d0c8"></div>
<div style="left:785px;top:15px;width:1px;height:349px;background:#d4d0c8"></div>
<div style="left:835px;top:15px;width:1px;height:349px;background:#d4d0c8"></div>
<div style="left:890px;top:15px;width:1px;height:349px;background:#d4d0c8"></div>
<div style="left:955px;top:15px;width:1px;height:349px;background:#d4d0c8"></div>
<div style="left:1030px;top:15px;width:1px;height:349px;background:#d4d0c8"></div>
<div style="left:1055px;top:15px;width:1px;height:349px;background:#d4d0c8"></div>
<div style="left:1085px;top:15px;width:1px;height:349px;background:#d4d0c8"></div>
</div>
<div style="left:0;top:0;width:1600px;height:755px;overflow:hidden">
<span class="t" style="left:221px;transform-origin:left;top:392px;font-size:11px;line-height:12px;color:#fff;transform:scaleX(0.91);">NISSAN ROGUE OR S…</span>
<span class="t" style="right:1238px;transform-origin:right;top:392px;font-size:11px;line-height:12px;color:#fff;transform:scaleX(1.224);">5</span>
<span class="t" style="left:366px;transform-origin:left;top:392px;font-size:11px;line-height:12px;color:#fff;transform:scaleX(0.995);">SUV(Intermediate) - Inclusive</span>
<span class="t" style="left:566px;transform-origin:left;top:392px;font-size:11px;line-height:12px;color:#fff;transform:scaleX(0.99);">Flexible Car…</span>
<span class="t" style="left:641px;transform-origin:left;top:392px;font-size:11px;line-height:12px;color:#fff;transform:scaleX(1.024);">Tue</span>
<span class="t" style="left:676px;transform-origin:left;top:392px;font-size:11px;line-height:12px;color:#fff;transform:scaleX(1.035);">25/04/2017</span>
<span class="t" style="left:746px;transform-origin:left;top:392px;font-size:11px;line-height:12px;color:#fff;transform:scaleX(1.053);">12:00</span>
<span class="t" style="left:786px;transform-origin:left;top:392px;font-size:11px;line-height:12px;color:#fff;transform:scaleX(1.091);">Fri</span>
<span class="t" style="left:821px;transform-origin:left;top:392px;font-size:11px;line-height:12px;color:#fff;transform:scaleX(1.044);">05/05/2017</span>
<span class="t" style="left:891px;transform-origin:left;top:392px;font-size:11px;line-height:12px;color:#fff;transform:scaleX(1.053);">12:00</span>
<span class="t" style="right:648px;transform-origin:right;top:392px;font-size:11px;line-height:12px;color:#fff;transform:scaleX(1.061);">10</span>
<span class="t" style="left:956px;transform-origin:left;top:392px;font-size:11px;line-height:12px;color:#fff;transform:scaleX(1.01);">On Air…</span>
<span class="t" style="left:1006px;transform-origin:left;top:392px;font-size:11px;line-height:12px;color:#fff;transform:scaleX(1.01);">On Air…</span>
<span class="t" style="right:492px;transform-origin:right;top:392px;font-size:11px;line-height:12px;color:#fff;transform:scaleX(1.061);">388.32</span>
<span class="t" style="right:427px;transform-origin:right;top:392px;font-size:11px;line-height:12px;color:#fff;transform:scaleX(1.061);">388.32</span>
<span class="t" style="left:1176px;transform-origin:left;top:392px;font-size:11px;line-height:12px;color:#fff;transform:scaleX(0.994);">Alamo</span>
<span class="t" style="left:1251px;transform-origin:left;top:392px;font-size:11px;line-height:12px;color:#fff;transform:scaleX(1.109);">yes</span>
<span class="t" style="left:1276px;transform-origin:left;top:392px;font-size:11px;line-height:12px;color:#fff;transform:scaleX(1.12);">auto</span>
<span class="t" style="left:221px;transform-origin:left;top:407px;font-size:11px;line-height:12px;transform:scaleX(0.91);">NISSAN ROGUE OR S…</span>
<span class="t" style="right:1238px;transform-origin:right;top:407px;font-size:11px;line-height:12px;transform:scaleX(1.224);">5</span>
<span class="t" style="left:366px;transform-origin:left;top:407px;font-size:11px;line-height:12px;transform:scaleX(0.98);">SUV(Intermediate) - Inclusive - Plus E…</span>
<span class="t" style="left:566px;transform-origin:left;top:407px;font-size:11px;line-height:12px;transform:scaleX(0.99);">Flexible Car…</span>
<span class="t" style="left:641px;transform-origin:left;top:407px;font-size:11px;line-height:12px;transform:scaleX(1.024);">Tue</span>
<span class="t" style="left:676px;transform-origin:left;top:407px;font-size:11px;line-height:12px;transform:scaleX(1.035);">25/04/2017</span>
<span class="t" style="left:746px;transform-origin:left;top:407px;font-size:11px;line-height:12px;transform:scaleX(1.053);">12:00</span>
<span class="t" style="left:786px;transform-origin:left;top:407px;font-size:11px;line-height:12px;transform:scaleX(1.091);">Fri</span>
<span class="t" style="left:821px;transform-origin:left;top:407px;font-size:11px;line-height:12px;transform:scaleX(1.044);">05/05/2017</span>
<span class="t" style="left:891px;transform-origin:left;top:407px;font-size:11px;line-height:12px;transform:scaleX(1.053);">12:00</span>
<span class="t" style="right:648px;transform-origin:right;top:407px;font-size:11px;line-height:12px;transform:scaleX(1.061);">10</span>
<span class="t" style="left:956px;transform-origin:left;top:407px;font-size:11px;line-height:12px;transform:scaleX(1.01);">On Air…</span>
<span class="t" style="left:1006px;transform-origin:left;top:407px;font-size:11px;line-height:12px;transform:scaleX(1.01);">On Air…</span>
<span class="t" style="right:492px;transform-origin:right;top:407px;font-size:11px;line-height:12px;transform:scaleX(1.061);">414.32</span>
<span class="t" style="right:427px;transform-origin:right;top:407px;font-size:11px;line-height:12px;transform:scaleX(1.061);">414.32</span>
<span class="t" style="left:1176px;transform-origin:left;top:407px;font-size:11px;line-height:12px;transform:scaleX(0.994);">Alamo</span>
<span class="t" style="left:1251px;transform-origin:left;top:407px;font-size:11px;line-height:12px;transform:scaleX(1.109);">yes</span>
<span class="t" style="left:1276px;transform-origin:left;top:407px;font-size:11px;line-height:12px;transform:scaleX(1.12);">auto</span>
<span class="t" style="left:221px;transform-origin:left;top:422px;font-size:11px;line-height:12px;transform:scaleX(0.91);">NISSAN ROGUE OR S…</span>
<span class="t" style="right:1238px;transform-origin:right;top:422px;font-size:11px;line-height:12px;transform:scaleX(1.224);">5</span>
<span class="t" style="left:366px;transform-origin:left;top:422px;font-size:11px;line-height:12px;transform:scaleX(0.983);">SUV(Intermediate) - Gold</span>
<span class="t" style="left:566px;transform-origin:left;top:422px;font-size:11px;line-height:12px;transform:scaleX(0.99);">Flexible Car…</span>
<span class="t" style="left:641px;transform-origin:left;top:422px;font-size:11px;line-height:12px;transform:scaleX(1.024);">Tue</span>
<span class="t" style="left:676px;transform-origin:left;top:422px;font-size:11px;line-height:12px;transform:scaleX(1.035);">25/04/2017</span>
<span class="t" style="left:746px;transform-origin:left;top:422px;font-size:11px;line-height:12px;transform:scaleX(1.053);">12:00</span>
<span class="t" style="left:786px;transform-origin:left;top:422px;font-size:11px;line-height:12px;transform:scaleX(1.091);">Fri</span>
<span class="t" style="left:821px;transform-origin:left;top:422px;font-size:11px;line-height:12px;transform:scaleX(1.044);">05/05/2017</span>
<span class="t" style="left:891px;transform-origin:left;top:422px;font-size:11px;line-height:12px;transform:scaleX(1.053);">12:00</span>
<span class="t" style="right:648px;transform-origin:right;top:422px;font-size:11px;line-height:12px;transform:scaleX(1.061);">10</span>
<span class="t" style="left:956px;transform-origin:left;top:422px;font-size:11px;line-height:12px;transform:scaleX(1.01);">On Air…</span>
<span class="t" style="left:1006px;transform-origin:left;top:422px;font-size:11px;line-height:12px;transform:scaleX(1.01);">On Air…</span>
<span class="t" style="right:492px;transform-origin:right;top:422px;font-size:11px;line-height:12px;transform:scaleX(1.061);">426.16</span>
<span class="t" style="right:427px;transform-origin:right;top:422px;font-size:11px;line-height:12px;transform:scaleX(1.061);">426.16</span>
<span class="t" style="left:1176px;transform-origin:left;top:422px;font-size:11px;line-height:12px;transform:scaleX(0.994);">Alamo</span>
<span class="t" style="left:1251px;transform-origin:left;top:422px;font-size:11px;line-height:12px;transform:scaleX(1.109);">yes</span>
<span class="t" style="left:1276px;transform-origin:left;top:422px;font-size:11px;line-height:12px;transform:scaleX(1.12);">auto</span>
<span class="t" style="left:221px;transform-origin:left;top:437px;font-size:11px;line-height:12px;transform:scaleX(0.91);">NISSAN ROGUE OR S…</span>
<span class="t" style="right:1238px;transform-origin:right;top:437px;font-size:11px;line-height:12px;transform:scaleX(1.224);">5</span>
<span class="t" style="left:366px;transform-origin:left;top:437px;font-size:11px;line-height:12px;transform:scaleX(0.973);">SUV(Intermediate) - Gold - Plus Exces…</span>
<span class="t" style="left:566px;transform-origin:left;top:437px;font-size:11px;line-height:12px;transform:scaleX(0.99);">Flexible Car…</span>
<span class="t" style="left:641px;transform-origin:left;top:437px;font-size:11px;line-height:12px;transform:scaleX(1.024);">Tue</span>
<span class="t" style="left:676px;transform-origin:left;top:437px;font-size:11px;line-height:12px;transform:scaleX(1.035);">25/04/2017</span>
<span class="t" style="left:746px;transform-origin:left;top:437px;font-size:11px;line-height:12px;transform:scaleX(1.053);">12:00</span>
<span class="t" style="left:786px;transform-origin:left;top:437px;font-size:11px;line-height:12px;transform:scaleX(1.091);">Fri</span>
<span class="t" style="left:821px;transform-origin:left;top:437px;font-size:11px;line-height:12px;transform:scaleX(1.044);">05/05/2017</span>
<span class="t" style="left:891px;transform-origin:left;top:437px;font-size:11px;line-height:12px;transform:scaleX(1.053);">12:00</span>
<span class="t" style="right:648px;transform-origin:right;top:437px;font-size:11px;line-height:12px;transform:scaleX(1.061);">10</span>
<span class="t" style="left:956px;transform-origin:left;top:437px;font-size:11px;line-height:12px;transform:scaleX(1.01);">On Air…</span>
<span class="t" style="left:1006px;transform-origin:left;top:437px;font-size:11px;line-height:12px;transform:scaleX(1.01);">On Air…</span>
<span class="t" style="right:492px;transform-origin:right;top:437px;font-size:11px;line-height:12px;transform:scaleX(1.061);">452.16</span>
<span class="t" style="right:427px;transform-origin:right;top:437px;font-size:11px;line-height:12px;transform:scaleX(1.061);">452.16</span>
<span class="t" style="left:1176px;transform-origin:left;top:437px;font-size:11px;line-height:12px;transform:scaleX(0.994);">Alamo</span>
<span class="t" style="left:1251px;transform-origin:left;top:437px;font-size:11px;line-height:12px;transform:scaleX(1.109);">yes</span>
<span class="t" style="left:1276px;transform-origin:left;top:437px;font-size:11px;line-height:12px;transform:scaleX(1.12);">auto</span>
<span class="t" style="left:221px;transform-origin:left;top:452px;font-size:11px;line-height:12px;transform:scaleX(0.941);">HYUNDAI SANTA FE …</span>
<span class="t" style="right:1238px;transform-origin:right;top:452px;font-size:11px;line-height:12px;transform:scaleX(1.224);">5</span>
<span class="t" style="left:366px;transform-origin:left;top:452px;font-size:11px;line-height:12px;transform:scaleX(0.979);">SUV(Standard) - Inclusive</span>
<span class="t" style="left:566px;transform-origin:left;top:452px;font-size:11px;line-height:12px;transform:scaleX(0.99);">Flexible Car…</span>
<span class="t" style="left:641px;transform-origin:left;top:452px;font-size:11px;line-height:12px;transform:scaleX(1.024);">Tue</span>
<span class="t" style="left:676px;transform-origin:left;top:452px;font-size:11px;line-height:12px;transform:scaleX(1.035);">25/04/2017</span>
<span class="t" style="left:746px;transform-origin:left;top:452px;font-size:11px;line-height:12px;transform:scaleX(1.053);">12:00</span>
<span class="t" style="left:786px;transform-origin:left;top:452px;font-size:11px;line-height:12px;transform:scaleX(1.091);">Fri</span>
<span class="t" style="left:821px;transform-origin:left;top:452px;font-size:11px;line-height:12px;transform:scaleX(1.044);">05/05/2017</span>
<span class="t" style="left:891px;transform-origin:left;top:452px;font-size:11px;line-height:12px;transform:scaleX(1.053);">12:00</span>
<span class="t" style="right:648px;transform-origin:right;top:452px;font-size:11px;line-height:12px;transform:scaleX(1.061);">10</span>
<span class="t" style="left:956px;transform-origin:left;top:452px;font-size:11px;line-height:12px;transform:scaleX(1.01);">On Air…</span>
<span class="t" style="left:1006px;transform-origin:left;top:452px;font-size:11px;line-height:12px;transform:scaleX(1.01);">On Air…</span>
<span class="t" style="right:492px;transform-origin:right;top:452px;font-size:11px;line-height:12px;transform:scaleX(1.061);">454.82</span>
<span class="t" style="right:427px;transform-origin:right;top:452px;font-size:11px;line-height:12px;transform:scaleX(1.061);">454.82</span>
<span class="t" style="left:1176px;transform-origin:left;top:452px;font-size:11px;line-height:12px;transform:scaleX(0.994);">Alamo</span>
<span class="t" style="left:1251px;transform-origin:left;top:452px;font-size:11px;line-height:12px;transform:scaleX(1.109);">yes</span>
<span class="t" style="left:1276px;transform-origin:left;top:452px;font-size:11px;line-height:12px;transform:scaleX(1.12);">auto</span>
<span class="t" style="left:221px;transform-origin:left;top:467px;font-size:11px;line-height:12px;transform:scaleX(0.941);">HYUNDAI SANTA FE …</span>
<span class="t" style="right:1238px;transform-origin:right;top:467px;font-size:11px;line-height:12px;transform:scaleX(1.224);">5</span>
<span class="t" style="left:366px;transform-origin:left;top:467px;font-size:11px;line-height:12px;transform:scaleX(0.979);">SUV(Standard) - Inclusive</span>
<span class="t" style="left:566px;transform-origin:left;top:467px;font-size:11px;line-height:12px;transform:scaleX(0.99);">Flexible Car…</span>
<span class="t" style="left:641px;transform-origin:left;top:467px;font-size:11px;line-height:12px;transform:scaleX(1.024);">Tue</span>
<span class="t" style="left:676px;transform-origin:left;top:467px;font-size:11px;line-height:12px;transform:scaleX(1.035);">25/04/2017</span>
<span class="t" style="left:746px;transform-origin:left;top:467px;font-size:11px;line-height:12px;transform:scaleX(1.053);">12:00</span>
<span class="t" style="left:786px;transform-origin:left;top:467px;font-size:11px;line-height:12px;transform:scaleX(1.091);">Fri</span>
<span class="t" style="left:821px;transform-origin:left;top:467px;font-size:11px;line-height:12px;transform:scaleX(1.044);">05/05/2017</span>
<span class="t" style="left:891px;transform-origin:left;top:467px;font-size:11px;line-height:12px;transform:scaleX(1.053);">12:00</span>
<span class="t" style="right:648px;transform-origin:right;top:467px;font-size:11px;line-height:12px;transform:scaleX(1.061);">10</span>
<span class="t" style="left:956px;transform-origin:left;top:467px;font-size:11px;line-height:12px;transform:scaleX(1.01);">On Air…</span>
<span class="t" style="left:1006px;transform-origin:left;top:467px;font-size:11px;line-height:12px;transform:scaleX(1.01);">On Air…</span>
<span class="t" style="right:492px;transform-origin:right;top:467px;font-size:11px;line-height:12px;transform:scaleX(1.061);">461.29</span>
<span class="t" style="right:427px;transform-origin:right;top:467px;font-size:11px;line-height:12px;transform:scaleX(1.061);">461.29</span>
<span class="t" style="left:1176px;transform-origin:left;top:467px;font-size:11px;line-height:12px;transform:scaleX(1.016);">National</span>
<span class="t" style="left:1251px;transform-origin:left;top:467px;font-size:11px;line-height:12px;transform:scaleX(1.109);">yes</span>
<span class="t" style="left:1276px;transform-origin:left;top:467px;font-size:11px;line-height:12px;transform:scaleX(1.12);">auto</span>
<span class="t" style="left:221px;transform-origin:left;top:482px;font-size:11px;line-height:12px;transform:scaleX(0.91);">NISSAN ROGUE OR S…</span>
<span class="t" style="right:1238px;transform-origin:right;top:482px;font-size:11px;line-height:12px;transform:scaleX(1.224);">5</span>
<span class="t" style="left:366px;transform-origin:left;top:482px;font-size:11px;line-height:12px;transform:scaleX(0.97);">SUV(Intermediate) - Inclusive GPS</span>
<span class="t" style="left:566px;transform-origin:left;top:482px;font-size:11px;line-height:12px;transform:scaleX(0.99);">Flexible Car…</span>
<span class="t" style="left:641px;transform-origin:left;top:482px;font-size:11px;line-height:12px;transform:scaleX(1.024);">Tue</span>
<span class="t" style="left:676px;transform-origin:left;top:482px;font-size:11px;line-height:12px;transform:scaleX(1.035);">25/04/2017</span>
<span class="t" style="left:746px;transform-origin:left;top:482px;font-size:11px;line-height:12px;transform:scaleX(1.053);">12:00</span>
<span class="t" style="left:786px;transform-origin:left;top:482px;font-size:11px;line-height:12px;transform:scaleX(1.091);">Fri</span>
<span class="t" style="left:821px;transform-origin:left;top:482px;font-size:11px;line-height:12px;transform:scaleX(1.044);">05/05/2017</span>
<span class="t" style="left:891px;transform-origin:left;top:482px;font-size:11px;line-height:12px;transform:scaleX(1.053);">12:00</span>
<span class="t" style="right:648px;transform-origin:right;top:482px;font-size:11px;line-height:12px;transform:scaleX(1.061);">10</span>
<span class="t" style="left:956px;transform-origin:left;top:482px;font-size:11px;line-height:12px;transform:scaleX(1.01);">On Air…</span>
<span class="t" style="left:1006px;transform-origin:left;top:482px;font-size:11px;line-height:12px;transform:scaleX(1.01);">On Air…</span>
<span class="t" style="right:492px;transform-origin:right;top:482px;font-size:11px;line-height:12px;transform:scaleX(1.061);">464.90</span>
<span class="t" style="right:427px;transform-origin:right;top:482px;font-size:11px;line-height:12px;transform:scaleX(1.061);">464.90</span>
<span class="t" style="left:1176px;transform-origin:left;top:482px;font-size:11px;line-height:12px;transform:scaleX(0.994);">Alamo</span>
<span class="t" style="left:1251px;transform-origin:left;top:482px;font-size:11px;line-height:12px;transform:scaleX(1.109);">yes</span>
<span class="t" style="left:1276px;transform-origin:left;top:482px;font-size:11px;line-height:12px;transform:scaleX(1.12);">auto</span>
<span class="t" style="left:221px;transform-origin:left;top:497px;font-size:11px;line-height:12px;transform:scaleX(0.941);">HYUNDAI SANTA FE …</span>
<span class="t" style="right:1238px;transform-origin:right;top:497px;font-size:11px;line-height:12px;transform:scaleX(1.224);">5</span>
<span class="t" style="left:366px;transform-origin:left;top:497px;font-size:11px;line-height:12px;transform:scaleX(0.97);">SUV(Standard) - Inclusive - Plus Exce…</span>
<span class="t" style="left:566px;transform-origin:left;top:497px;font-size:11px;line-height:12px;transform:scaleX(0.99);">Flexible Car…</span>
<span class="t" style="left:641px;transform-origin:left;top:497px;font-size:11px;line-height:12px;transform:scaleX(1.024);">Tue</span>
<span class="t" style="left:676px;transform-origin:left;top:497px;font-size:11px;line-height:12px;transform:scaleX(1.035);">25/04/2017</span>
<span class="t" style="left:746px;transform-origin:left;top:497px;font-size:11px;line-height:12px;transform:scaleX(1.053);">12:00</span>
<span class="t" style="left:786px;transform-origin:left;top:497px;font-size:11px;line-height:12px;transform:scaleX(1.091);">Fri</span>
<span class="t" style="left:821px;transform-origin:left;top:497px;font-size:11px;line-height:12px;transform:scaleX(1.044);">05/05/2017</span>
<span class="t" style="left:891px;transform-origin:left;top:497px;font-size:11px;line-height:12px;transform:scaleX(1.053);">12:00</span>
<span class="t" style="right:648px;transform-origin:right;top:497px;font-size:11px;line-height:12px;transform:scaleX(1.061);">10</span>
<span class="t" style="left:956px;transform-origin:left;top:497px;font-size:11px;line-height:12px;transform:scaleX(1.01);">On Air…</span>
<span class="t" style="left:1006px;transform-origin:left;top:497px;font-size:11px;line-height:12px;transform:scaleX(1.01);">On Air…</span>
<span class="t" style="right:492px;transform-origin:right;top:497px;font-size:11px;line-height:12px;transform:scaleX(1.061);">480.82</span>
<span class="t" style="right:427px;transform-origin:right;top:497px;font-size:11px;line-height:12px;transform:scaleX(1.061);">480.82</span>
<span class="t" style="left:1176px;transform-origin:left;top:497px;font-size:11px;line-height:12px;transform:scaleX(0.994);">Alamo</span>
<span class="t" style="left:1251px;transform-origin:left;top:497px;font-size:11px;line-height:12px;transform:scaleX(1.109);">yes</span>
<span class="t" style="left:1276px;transform-origin:left;top:497px;font-size:11px;line-height:12px;transform:scaleX(1.12);">auto</span>
<span class="t" style="left:221px;transform-origin:left;top:512px;font-size:11px;line-height:12px;transform:scaleX(0.91);">NISSAN ROGUE OR S…</span>
<span class="t" style="right:1238px;transform-origin:right;top:512px;font-size:11px;line-height:12px;transform:scaleX(1.224);">5</span>
<span class="t" style="left:366px;transform-origin:left;top:512px;font-size:11px;line-height:12px;transform:scaleX(0.956);">SUV(Intermediate) - Gold GPS</span>
<span class="t" style="left:566px;transform-origin:left;top:512px;font-size:11px;line-height:12px;transform:scaleX(0.99);">Flexible Car…</span>
<span class="t" style="left:641px;transform-origin:left;top:512px;font-size:11px;line-height:12px;transform:scaleX(1.024);">Tue</span>
<span class="t" style="left:676px;transform-origin:left;top:512px;font-size:11px;line-height:12px;transform:scaleX(1.035);">25/04/2017</span>
<span class="t" style="left:746px;transform-origin:left;top:512px;font-size:11px;line-height:12px;transform:scaleX(1.053);">12:00</span>
<span class="t" style="left:786px;transform-origin:left;top:512px;font-size:11px;line-height:12px;transform:scaleX(1.091);">Fri</span>
<span class="t" style="left:821px;transform-origin:left;top:512px;font-size:11px;line-height:12px;transform:scaleX(1.044);">05/05/2017</span>
<span class="t" style="left:891px;transform-origin:left;top:512px;font-size:11px;line-height:12px;transform:scaleX(1.053);">12:00</span>
<span class="t" style="right:648px;transform-origin:right;top:512px;font-size:11px;line-height:12px;transform:scaleX(1.061);">10</span>
<span class="t" style="left:956px;transform-origin:left;top:512px;font-size:11px;line-height:12px;transform:scaleX(1.01);">On Air…</span>
<span class="t" style="left:1006px;transform-origin:left;top:512px;font-size:11px;line-height:12px;transform:scaleX(1.01);">On Air…</span>
<span class="t" style="right:492px;transform-origin:right;top:512px;font-size:11px;line-height:12px;transform:scaleX(1.061);">482.43</span>
<span class="t" style="right:427px;transform-origin:right;top:512px;font-size:11px;line-height:12px;transform:scaleX(1.061);">482.43</span>
<span class="t" style="left:1176px;transform-origin:left;top:512px;font-size:11px;line-height:12px;transform:scaleX(0.994);">Alamo</span>
<span class="t" style="left:1251px;transform-origin:left;top:512px;font-size:11px;line-height:12px;transform:scaleX(1.109);">yes</span>
<span class="t" style="left:1276px;transform-origin:left;top:512px;font-size:11px;line-height:12px;transform:scaleX(1.12);">auto</span>
<span class="t" style="left:221px;transform-origin:left;top:527px;font-size:11px;line-height:12px;transform:scaleX(0.941);">HYUNDAI SANTA FE …</span>
<span class="t" style="right:1238px;transform-origin:right;top:527px;font-size:11px;line-height:12px;transform:scaleX(1.224);">5</span>
<span class="t" style="left:366px;transform-origin:left;top:527px;font-size:11px;line-height:12px;transform:scaleX(0.97);">SUV(Standard) - Inclusive - Plus Exce…</span>
<span class="t" style="left:566px;transform-origin:left;top:527px;font-size:11px;line-height:12px;transform:scaleX(0.99);">Flexible Car…</span>
<span class="t" style="left:641px;transform-origin:left;top:527px;font-size:11px;line-height:12px;transform:scaleX(1.024);">Tue</span>
<span class="t" style="left:676px;transform-origin:left;top:527px;font-size:11px;line-height:12px;transform:scaleX(1.035);">25/04/2017</span>
<span class="t" style="left:746px;transform-origin:left;top:527px;font-size:11px;line-height:12px;transform:scaleX(1.053);">12:00</span>
<span class="t" style="left:786px;transform-origin:left;top:527px;font-size:11px;line-height:12px;transform:scaleX(1.091);">Fri</span>
<span class="t" style="left:821px;transform-origin:left;top:527px;font-size:11px;line-height:12px;transform:scaleX(1.044);">05/05/2017</span>
<span class="t" style="left:891px;transform-origin:left;top:527px;font-size:11px;line-height:12px;transform:scaleX(1.053);">12:00</span>
<span class="t" style="right:648px;transform-origin:right;top:527px;font-size:11px;line-height:12px;transform:scaleX(1.061);">10</span>
<span class="t" style="left:956px;transform-origin:left;top:527px;font-size:11px;line-height:12px;transform:scaleX(1.01);">On Air…</span>
<span class="t" style="left:1006px;transform-origin:left;top:527px;font-size:11px;line-height:12px;transform:scaleX(1.01);">On Air…</span>
<span class="t" style="right:492px;transform-origin:right;top:527px;font-size:11px;line-height:12px;transform:scaleX(1.061);">487.29</span>
<span class="t" style="right:427px;transform-origin:right;top:527px;font-size:11px;line-height:12px;transform:scaleX(1.061);">487.29</span>
<span class="t" style="left:1176px;transform-origin:left;top:527px;font-size:11px;line-height:12px;transform:scaleX(1.016);">National</span>
<span class="t" style="left:1251px;transform-origin:left;top:527px;font-size:11px;line-height:12px;transform:scaleX(1.109);">yes</span>
<span class="t" style="left:1276px;transform-origin:left;top:527px;font-size:11px;line-height:12px;transform:scaleX(1.12);">auto</span>
<span class="t" style="left:221px;transform-origin:left;top:542px;font-size:11px;line-height:12px;transform:scaleX(0.91);">NISSAN ROGUE OR S…</span>
<span class="t" style="right:1238px;transform-origin:right;top:542px;font-size:11px;line-height:12px;transform:scaleX(1.224);">5</span>
<span class="t" style="left:366px;transform-origin:left;top:542px;font-size:11px;line-height:12px;transform:scaleX(0.974);">SUV(Intermediate) - Inclusive GPS - Pl…</span>
<span class="t" style="left:566px;transform-origin:left;top:542px;font-size:11px;line-height:12px;transform:scaleX(0.99);">Flexible Car…</span>
<span class="t" style="left:641px;transform-origin:left;top:542px;font-size:11px;line-height:12px;transform:scaleX(1.024);">Tue</span>
<span class="t" style="left:676px;transform-origin:left;top:542px;font-size:11px;line-height:12px;transform:scaleX(1.035);">25/04/2017</span>
<span class="t" style="left:746px;transform-origin:left;top:542px;font-size:11px;line-height:12px;transform:scaleX(1.053);">12:00</span>
<span class="t" style="left:786px;transform-origin:left;top:542px;font-size:11px;line-height:12px;transform:scaleX(1.091);">Fri</span>
<span class="t" style="left:821px;transform-origin:left;top:542px;font-size:11px;line-height:12px;transform:scaleX(1.044);">05/05/2017</span>
<span class="t" style="left:891px;transform-origin:left;top:542px;font-size:11px;line-height:12px;transform:scaleX(1.053);">12:00</span>
<span class="t" style="right:648px;transform-origin:right;top:542px;font-size:11px;line-height:12px;transform:scaleX(1.061);">10</span>
<span class="t" style="left:956px;transform-origin:left;top:542px;font-size:11px;line-height:12px;transform:scaleX(1.01);">On Air…</span>
<span class="t" style="left:1006px;transform-origin:left;top:542px;font-size:11px;line-height:12px;transform:scaleX(1.01);">On Air…</span>
<span class="t" style="right:492px;transform-origin:right;top:542px;font-size:11px;line-height:12px;transform:scaleX(1.061);">490.90</span>
<span class="t" style="right:427px;transform-origin:right;top:542px;font-size:11px;line-height:12px;transform:scaleX(1.061);">490.90</span>
<span class="t" style="left:1176px;transform-origin:left;top:542px;font-size:11px;line-height:12px;transform:scaleX(0.994);">Alamo</span>
<span class="t" style="left:1251px;transform-origin:left;top:542px;font-size:11px;line-height:12px;transform:scaleX(1.109);">yes</span>
<span class="t" style="left:1276px;transform-origin:left;top:542px;font-size:11px;line-height:12px;transform:scaleX(1.12);">auto</span>
<span class="t" style="left:221px;transform-origin:left;top:557px;font-size:11px;line-height:12px;transform:scaleX(0.941);">HYUNDAI SANTA FE …</span>
<span class="t" style="right:1238px;transform-origin:right;top:557px;font-size:11px;line-height:12px;transform:scaleX(1.224);">5</span>
<span class="t" style="left:366px;transform-origin:left;top:557px;font-size:11px;line-height:12px;transform:scaleX(0.966);">SUV(Standard) - Gold</span>
<span class="t" style="left:566px;transform-origin:left;top:557px;font-size:11px;line-height:12px;transform:scaleX(0.99);">Flexible Car…</span>
<span class="t" style="left:641px;transform-origin:left;top:557px;font-size:11px;line-height:12px;transform:scaleX(1.024);">Tue</span>
<span class="t" style="left:676px;transform-origin:left;top:557px;font-size:11px;line-height:12px;transform:scaleX(1.035);">25/04/2017</span>
<span class="t" style="left:746px;transform-origin:left;top:557px;font-size:11px;line-height:12px;transform:scaleX(1.053);">12:00</span>
<span class="t" style="left:786px;transform-origin:left;top:557px;font-size:11px;line-height:12px;transform:scaleX(1.091);">Fri</span>
<span class="t" style="left:821px;transform-origin:left;top:557px;font-size:11px;line-height:12px;transform:scaleX(1.044);">05/05/2017</span>
<span class="t" style="left:891px;transform-origin:left;top:557px;font-size:11px;line-height:12px;transform:scaleX(1.053);">12:00</span>
<span class="t" style="right:648px;transform-origin:right;top:557px;font-size:11px;line-height:12px;transform:scaleX(1.061);">10</span>
<span class="t" style="left:956px;transform-origin:left;top:557px;font-size:11px;line-height:12px;transform:scaleX(1.01);">On Air…</span>
<span class="t" style="left:1006px;transform-origin:left;top:557px;font-size:11px;line-height:12px;transform:scaleX(1.01);">On Air…</span>
<span class="t" style="right:492px;transform-origin:right;top:557px;font-size:11px;line-height:12px;transform:scaleX(1.061);">497.26</span>
<span class="t" style="right:427px;transform-origin:right;top:557px;font-size:11px;line-height:12px;transform:scaleX(1.061);">497.26</span>
<span class="t" style="left:1176px;transform-origin:left;top:557px;font-size:11px;line-height:12px;transform:scaleX(0.994);">Alamo</span>
<span class="t" style="left:1251px;transform-origin:left;top:557px;font-size:11px;line-height:12px;transform:scaleX(1.109);">yes</span>
<span class="t" style="left:1276px;transform-origin:left;top:557px;font-size:11px;line-height:12px;transform:scaleX(1.12);">auto</span>
<span class="t" style="left:221px;transform-origin:left;top:572px;font-size:11px;line-height:12px;transform:scaleX(0.91);">NISSAN ROGUE OR S…</span>
<span class="t" style="right:1238px;transform-origin:right;top:572px;font-size:11px;line-height:12px;transform:scaleX(1.224);">5</span>
<span class="t" style="left:366px;transform-origin:left;top:572px;font-size:11px;line-height:12px;transform:scaleX(0.956);">SUV(Intermediate) - Gold GPS - Plus E…</span>
<span class="t" style="left:566px;transform-origin:left;top:572px;font-size:11px;line-height:12px;transform:scaleX(0.99);">Flexible Car…</span>
<span class="t" style="left:641px;transform-origin:left;top:572px;font-size:11px;line-height:12px;transform:scaleX(1.024);">Tue</span>
<span class="t" style="left:676px;transform-origin:left;top:572px;font-size:11px;line-height:12px;transform:scaleX(1.035);">25/04/2017</span>
<span class="t" style="left:746px;transform-origin:left;top:572px;font-size:11px;line-height:12px;transform:scaleX(1.053);">12:00</span>
<span class="t" style="left:786px;transform-origin:left;top:572px;font-size:11px;line-height:12px;transform:scaleX(1.091);">Fri</span>
<span class="t" style="left:821px;transform-origin:left;top:572px;font-size:11px;line-height:12px;transform:scaleX(1.044);">05/05/2017</span>
<span class="t" style="left:891px;transform-origin:left;top:572px;font-size:11px;line-height:12px;transform:scaleX(1.053);">12:00</span>
<span class="t" style="right:648px;transform-origin:right;top:572px;font-size:11px;line-height:12px;transform:scaleX(1.061);">10</span>
<span class="t" style="left:956px;transform-origin:left;top:572px;font-size:11px;line-height:12px;transform:scaleX(1.01);">On Air…</span>
<span class="t" style="left:1006px;transform-origin:left;top:572px;font-size:11px;line-height:12px;transform:scaleX(1.01);">On Air…</span>
<span class="t" style="right:492px;transform-origin:right;top:572px;font-size:11px;line-height:12px;transform:scaleX(1.061);">508.43</span>
<span class="t" style="right:427px;transform-origin:right;top:572px;font-size:11px;line-height:12px;transform:scaleX(1.061);">508.43</span>
<span class="t" style="left:1176px;transform-origin:left;top:572px;font-size:11px;line-height:12px;transform:scaleX(0.994);">Alamo</span>
<span class="t" style="left:1251px;transform-origin:left;top:572px;font-size:11px;line-height:12px;transform:scaleX(1.109);">yes</span>
<span class="t" style="left:1276px;transform-origin:left;top:572px;font-size:11px;line-height:12px;transform:scaleX(1.12);">auto</span>
<span class="t" style="left:221px;transform-origin:left;top:587px;font-size:11px;line-height:12px;transform:scaleX(0.941);">HYUNDAI SANTA FE …</span>
<span class="t" style="right:1238px;transform-origin:right;top:587px;font-size:11px;line-height:12px;transform:scaleX(1.224);">5</span>
<span class="t" style="left:366px;transform-origin:left;top:587px;font-size:11px;line-height:12px;transform:scaleX(0.966);">SUV(Standard) - Gold</span>
<span class="t" style="left:566px;transform-origin:left;top:587px;font-size:11px;line-height:12px;transform:scaleX(0.99);">Flexible Car…</span>
<span class="t" style="left:641px;transform-origin:left;top:587px;font-size:11px;line-height:12px;transform:scaleX(1.024);">Tue</span>
<span class="t" style="left:676px;transform-origin:left;top:587px;font-size:11px;line-height:12px;transform:scaleX(1.035);">25/04/2017</span>
<span class="t" style="left:746px;transform-origin:left;top:587px;font-size:11px;line-height:12px;transform:scaleX(1.053);">12:00</span>
<span class="t" style="left:786px;transform-origin:left;top:587px;font-size:11px;line-height:12px;transform:scaleX(1.091);">Fri</span>
<span class="t" style="left:821px;transform-origin:left;top:587px;font-size:11px;line-height:12px;transform:scaleX(1.044);">05/05/2017</span>
<span class="t" style="left:891px;transform-origin:left;top:587px;font-size:11px;line-height:12px;transform:scaleX(1.053);">12:00</span>
<span class="t" style="right:648px;transform-origin:right;top:587px;font-size:11px;line-height:12px;transform:scaleX(1.061);">10</span>
<span class="t" style="left:956px;transform-origin:left;top:587px;font-size:11px;line-height:12px;transform:scaleX(1.01);">On Air…</span>
<span class="t" style="left:1006px;transform-origin:left;top:587px;font-size:11px;line-height:12px;transform:scaleX(1.01);">On Air…</span>
<span class="t" style="right:492px;transform-origin:right;top:587px;font-size:11px;line-height:12px;transform:scaleX(1.061);">514.33</span>
<span class="t" style="right:427px;transform-origin:right;top:587px;font-size:11px;line-height:12px;transform:scaleX(1.061);">514.33</span>
<span class="t" style="left:1176px;transform-origin:left;top:587px;font-size:11px;line-height:12px;transform:scaleX(1.016);">National</span>
<span class="t" style="left:1251px;transform-origin:left;top:587px;font-size:11px;line-height:12px;transform:scaleX(1.109);">yes</span>
<span class="t" style="left:1276px;transform-origin:left;top:587px;font-size:11px;line-height:12px;transform:scaleX(1.12);">auto</span>
<span class="t" style="left:221px;transform-origin:left;top:602px;font-size:11px;line-height:12px;transform:scaleX(0.941);">HYUNDAI SANTA FE …</span>
<span class="t" style="right:1238px;transform-origin:right;top:602px;font-size:11px;line-height:12px;transform:scaleX(1.224);">5</span>
<span class="t" style="left:366px;transform-origin:left;top:602px;font-size:11px;line-height:12px;transform:scaleX(0.958);">SUV(Standard) - Gold - Plus Excess R…</span>
<span class="t" style="left:566px;transform-origin:left;top:602px;font-size:11px;line-height:12px;transform:scaleX(0.99);">Flexible Car…</span>
<span class="t" style="left:641px;transform-origin:left;top:602px;font-size:11px;line-height:12px;transform:scaleX(1.024);">Tue</span>
<span class="t" style="left:676px;transform-origin:left;top:602px;font-size:11px;line-height:12px;transform:scaleX(1.035);">25/04/2017</span>
<span class="t" style="left:746px;transform-origin:left;top:602px;font-size:11px;line-height:12px;transform:scaleX(1.053);">12:00</span>
<span class="t" style="left:786px;transform-origin:left;top:602px;font-size:11px;line-height:12px;transform:scaleX(1.091);">Fri</span>
<span class="t" style="left:821px;transform-origin:left;top:602px;font-size:11px;line-height:12px;transform:scaleX(1.044);">05/05/2017</span>
<span class="t" style="left:891px;transform-origin:left;top:602px;font-size:11px;line-height:12px;transform:scaleX(1.053);">12:00</span>
<span class="t" style="right:648px;transform-origin:right;top:602px;font-size:11px;line-height:12px;transform:scaleX(1.061);">10</span>
<span class="t" style="left:956px;transform-origin:left;top:602px;font-size:11px;line-height:12px;transform:scaleX(1.01);">On Air…</span>
<span class="t" style="left:1006px;transform-origin:left;top:602px;font-size:11px;line-height:12px;transform:scaleX(1.01);">On Air…</span>
<span class="t" style="right:492px;transform-origin:right;top:602px;font-size:11px;line-height:12px;transform:scaleX(1.061);">523.26</span>
<span class="t" style="right:427px;transform-origin:right;top:602px;font-size:11px;line-height:12px;transform:scaleX(1.061);">523.26</span>
<span class="t" style="left:1176px;transform-origin:left;top:602px;font-size:11px;line-height:12px;transform:scaleX(0.994);">Alamo</span>
<span class="t" style="left:1251px;transform-origin:left;top:602px;font-size:11px;line-height:12px;transform:scaleX(1.109);">yes</span>
<span class="t" style="left:1276px;transform-origin:left;top:602px;font-size:11px;line-height:12px;transform:scaleX(1.12);">auto</span>
<span class="t" style="left:221px;transform-origin:left;top:617px;font-size:11px;line-height:12px;transform:scaleX(0.941);">HYUNDAI SANTA FE …</span>
<span class="t" style="right:1238px;transform-origin:right;top:617px;font-size:11px;line-height:12px;transform:scaleX(1.224);">5</span>
<span class="t" style="left:366px;transform-origin:left;top:617px;font-size:11px;line-height:12px;transform:scaleX(0.955);">SUV(Standard) - Inclusive GPS</span>
<span class="t" style="left:566px;transform-origin:left;top:617px;font-size:11px;line-height:12px;transform:scaleX(0.99);">Flexible Car…</span>
<span class="t" style="left:641px;transform-origin:left;top:617px;font-size:11px;line-height:12px;transform:scaleX(1.024);">Tue</span>
<span class="t" style="left:676px;transform-origin:left;top:617px;font-size:11px;line-height:12px;transform:scaleX(1.035);">25/04/2017</span>
<span class="t" style="left:746px;transform-origin:left;top:617px;font-size:11px;line-height:12px;transform:scaleX(1.053);">12:00</span>
<span class="t" style="left:786px;transform-origin:left;top:617px;font-size:11px;line-height:12px;transform:scaleX(1.091);">Fri</span>
<span class="t" style="left:821px;transform-origin:left;top:617px;font-size:11px;line-height:12px;transform:scaleX(1.044);">05/05/2017</span>
<span class="t" style="left:891px;transform-origin:left;top:617px;font-size:11px;line-height:12px;transform:scaleX(1.053);">12:00</span>
<span class="t" style="right:648px;transform-origin:right;top:617px;font-size:11px;line-height:12px;transform:scaleX(1.061);">10</span>
<span class="t" style="left:956px;transform-origin:left;top:617px;font-size:11px;line-height:12px;transform:scaleX(1.01);">On Air…</span>
<span class="t" style="left:1006px;transform-origin:left;top:617px;font-size:11px;line-height:12px;transform:scaleX(1.01);">On Air…</span>
<span class="t" style="right:492px;transform-origin:right;top:617px;font-size:11px;line-height:12px;transform:scaleX(1.061);">531.39</span>
<span class="t" style="right:427px;transform-origin:right;top:617px;font-size:11px;line-height:12px;transform:scaleX(1.061);">531.39</span>
<span class="t" style="left:1176px;transform-origin:left;top:617px;font-size:11px;line-height:12px;transform:scaleX(0.994);">Alamo</span>
<span class="t" style="left:1251px;transform-origin:left;top:617px;font-size:11px;line-height:12px;transform:scaleX(1.109);">yes</span>
<span class="t" style="left:1276px;transform-origin:left;top:617px;font-size:11px;line-height:12px;transform:scaleX(1.12);">auto</span>
<span class="t" style="left:221px;transform-origin:left;top:632px;font-size:11px;line-height:12px;transform:scaleX(0.941);">HYUNDAI SANTA FE …</span>
<span class="t" style="right:1238px;transform-origin:right;top:632px;font-size:11px;line-height:12px;transform:scaleX(1.224);">5</span>
<span class="t" style="left:366px;transform-origin:left;top:632px;font-size:11px;line-height:12px;transform:scaleX(0.955);">SUV(Standard) - Inclusive GPS</span>
<span class="t" style="left:566px;transform-origin:left;top:632px;font-size:11px;line-height:12px;transform:scaleX(0.99);">Flexible Car…</span>
<span class="t" style="left:641px;transform-origin:left;top:632px;font-size:11px;line-height:12px;transform:scaleX(1.024);">Tue</span>
<span class="t" style="left:676px;transform-origin:left;top:632px;font-size:11px;line-height:12px;transform:scaleX(1.035);">25/04/2017</span>
<span class="t" style="left:746px;transform-origin:left;top:632px;font-size:11px;line-height:12px;transform:scaleX(1.053);">12:00</span>
<span class="t" style="left:786px;transform-origin:left;top:632px;font-size:11px;line-height:12px;transform:scaleX(1.091);">Fri</span>
<span class="t" style="left:821px;transform-origin:left;top:632px;font-size:11px;line-height:12px;transform:scaleX(1.044);">05/05/2017</span>
<span class="t" style="left:891px;transform-origin:left;top:632px;font-size:11px;line-height:12px;transform:scaleX(1.053);">12:00</span>
<span class="t" style="right:648px;transform-origin:right;top:632px;font-size:11px;line-height:12px;transform:scaleX(1.061);">10</span>
<span class="t" style="left:956px;transform-origin:left;top:632px;font-size:11px;line-height:12px;transform:scaleX(1.01);">On Air…</span>
<span class="t" style="left:1006px;transform-origin:left;top:632px;font-size:11px;line-height:12px;transform:scaleX(1.01);">On Air…</span>
<span class="t" style="right:492px;transform-origin:right;top:632px;font-size:11px;line-height:12px;transform:scaleX(1.061);">535.90</span>
<span class="t" style="right:427px;transform-origin:right;top:632px;font-size:11px;line-height:12px;transform:scaleX(1.061);">535.90</span>
<span class="t" style="left:1176px;transform-origin:left;top:632px;font-size:11px;line-height:12px;transform:scaleX(1.016);">National</span>
<span class="t" style="left:1251px;transform-origin:left;top:632px;font-size:11px;line-height:12px;transform:scaleX(1.109);">yes</span>
<span class="t" style="left:1276px;transform-origin:left;top:632px;font-size:11px;line-height:12px;transform:scaleX(1.12);">auto</span>
<span class="t" style="left:221px;transform-origin:left;top:647px;font-size:11px;line-height:12px;transform:scaleX(0.941);">HYUNDAI SANTA FE …</span>
<span class="t" style="right:1238px;transform-origin:right;top:647px;font-size:11px;line-height:12px;transform:scaleX(1.224);">5</span>
<span class="t" style="left:366px;transform-origin:left;top:647px;font-size:11px;line-height:12px;transform:scaleX(0.958);">SUV(Standard) - Gold - Plus Excess R…</span>
<span class="t" style="left:566px;transform-origin:left;top:647px;font-size:11px;line-height:12px;transform:scaleX(0.99);">Flexible Car…</span>
<span class="t" style="left:641px;transform-origin:left;top:647px;font-size:11px;line-height:12px;transform:scaleX(1.024);">Tue</span>
<span class="t" style="left:676px;transform-origin:left;top:647px;font-size:11px;line-height:12px;transform:scaleX(1.035);">25/04/2017</span>
<span class="t" style="left:746px;transform-origin:left;top:647px;font-size:11px;line-height:12px;transform:scaleX(1.053);">12:00</span>
<span class="t" style="left:786px;transform-origin:left;top:647px;font-size:11px;line-height:12px;transform:scaleX(1.091);">Fri</span>
<span class="t" style="left:821px;transform-origin:left;top:647px;font-size:11px;line-height:12px;transform:scaleX(1.044);">05/05/2017</span>
<span class="t" style="left:891px;transform-origin:left;top:647px;font-size:11px;line-height:12px;transform:scaleX(1.053);">12:00</span>
<span class="t" style="right:648px;transform-origin:right;top:647px;font-size:11px;line-height:12px;transform:scaleX(1.061);">10</span>
<span class="t" style="left:956px;transform-origin:left;top:647px;font-size:11px;line-height:12px;transform:scaleX(1.01);">On Air…</span>
<span class="t" style="left:1006px;transform-origin:left;top:647px;font-size:11px;line-height:12px;transform:scaleX(1.01);">On Air…</span>
<span class="t" style="right:492px;transform-origin:right;top:647px;font-size:11px;line-height:12px;transform:scaleX(1.061);">540.33</span>
<span class="t" style="right:427px;transform-origin:right;top:647px;font-size:11px;line-height:12px;transform:scaleX(1.061);">540.33</span>
<span class="t" style="left:1176px;transform-origin:left;top:647px;font-size:11px;line-height:12px;transform:scaleX(1.016);">National</span>
<span class="t" style="left:1251px;transform-origin:left;top:647px;font-size:11px;line-height:12px;transform:scaleX(1.109);">yes</span>
<span class="t" style="left:1276px;transform-origin:left;top:647px;font-size:11px;line-height:12px;transform:scaleX(1.12);">auto</span>
<span class="t" style="left:221px;transform-origin:left;top:662px;font-size:11px;line-height:12px;transform:scaleX(0.933);">CHEVY TAHOE OR SI…</span>
<span class="t" style="right:1238px;transform-origin:right;top:662px;font-size:11px;line-height:12px;transform:scaleX(1.224);">7</span>
<span class="t" style="left:366px;transform-origin:left;top:662px;font-size:11px;line-height:12px;transform:scaleX(0.951);">SUV(Full Size) - Inclusive</span>
<span class="t" style="left:566px;transform-origin:left;top:662px;font-size:11px;line-height:12px;transform:scaleX(0.99);">Flexible Car…</span>
<span class="t" style="left:641px;transform-origin:left;top:662px;font-size:11px;line-height:12px;transform:scaleX(1.024);">Tue</span>
<span class="t" style="left:676px;transform-origin:left;top:662px;font-size:11px;line-height:12px;transform:scaleX(1.035);">25/04/2017</span>
<span class="t" style="left:746px;transform-origin:left;top:662px;font-size:11px;line-height:12px;transform:scaleX(1.053);">12:00</span>
<span class="t" style="left:786px;transform-origin:left;top:662px;font-size:11px;line-height:12px;transform:scaleX(1.091);">Fri</span>
<span class="t" style="left:821px;transform-origin:left;top:662px;font-size:11px;line-height:12px;transform:scaleX(1.044);">05/05/2017</span>
<span class="t" style="left:891px;transform-origin:left;top:662px;font-size:11px;line-height:12px;transform:scaleX(1.053);">12:00</span>
<span class="t" style="right:648px;transform-origin:right;top:662px;font-size:11px;line-height:12px;transform:scaleX(1.061);">10</span>
<span class="t" style="left:956px;transform-origin:left;top:662px;font-size:11px;line-height:12px;transform:scaleX(1.01);">On Air…</span>
<span class="t" style="left:1006px;transform-origin:left;top:662px;font-size:11px;line-height:12px;transform:scaleX(1.01);">On Air…</span>
<span class="t" style="right:492px;transform-origin:right;top:662px;font-size:11px;line-height:12px;transform:scaleX(1.061);">551.68</span>
<span class="t" style="right:427px;transform-origin:right;top:662px;font-size:11px;line-height:12px;transform:scaleX(1.061);">551.68</span>
<span class="t" style="left:1176px;transform-origin:left;top:662px;font-size:11px;line-height:12px;transform:scaleX(0.994);">Alamo</span>
<span class="t" style="left:1251px;transform-origin:left;top:662px;font-size:11px;line-height:12px;transform:scaleX(1.109);">yes</span>
<span class="t" style="left:1276px;transform-origin:left;top:662px;font-size:11px;line-height:12px;transform:scaleX(1.12);">auto</span>
<span class="t" style="left:221px;transform-origin:left;top:677px;font-size:11px;line-height:12px;transform:scaleX(0.941);">HYUNDAI SANTA FE …</span>
<span class="t" style="right:1238px;transform-origin:right;top:677px;font-size:11px;line-height:12px;transform:scaleX(1.224);">5</span>
<span class="t" style="left:366px;transform-origin:left;top:677px;font-size:11px;line-height:12px;transform:scaleX(0.961);">SUV(Standard) - Inclusive GPS - Plus …</span>
<span class="t" style="left:566px;transform-origin:left;top:677px;font-size:11px;line-height:12px;transform:scaleX(0.99);">Flexible Car…</span>
<span class="t" style="left:641px;transform-origin:left;top:677px;font-size:11px;line-height:12px;transform:scaleX(1.024);">Tue</span>
<span class="t" style="left:676px;transform-origin:left;top:677px;font-size:11px;line-height:12px;transform:scaleX(1.035);">25/04/2017</span>
<span class="t" style="left:746px;transform-origin:left;top:677px;font-size:11px;line-height:12px;transform:scaleX(1.053);">12:00</span>
<span class="t" style="left:786px;transform-origin:left;top:677px;font-size:11px;line-height:12px;transform:scaleX(1.091);">Fri</span>
<span class="t" style="left:821px;transform-origin:left;top:677px;font-size:11px;line-height:12px;transform:scaleX(1.044);">05/05/2017</span>
<span class="t" style="left:891px;transform-origin:left;top:677px;font-size:11px;line-height:12px;transform:scaleX(1.053);">12:00</span>
<span class="t" style="right:648px;transform-origin:right;top:677px;font-size:11px;line-height:12px;transform:scaleX(1.061);">10</span>
<span class="t" style="left:956px;transform-origin:left;top:677px;font-size:11px;line-height:12px;transform:scaleX(1.01);">On Air…</span>
<span class="t" style="left:1006px;transform-origin:left;top:677px;font-size:11px;line-height:12px;transform:scaleX(1.01);">On Air…</span>
<span class="t" style="right:492px;transform-origin:right;top:677px;font-size:11px;line-height:12px;transform:scaleX(1.061);">557.39</span>
<span class="t" style="right:427px;transform-origin:right;top:677px;font-size:11px;line-height:12px;transform:scaleX(1.061);">557.39</span>
<span class="t" style="left:1176px;transform-origin:left;top:677px;font-size:11px;line-height:12px;transform:scaleX(0.994);">Alamo</span>
<span class="t" style="left:1251px;transform-origin:left;top:677px;font-size:11px;line-height:12px;transform:scaleX(1.109);">yes</span>
<span class="t" style="left:1276px;transform-origin:left;top:677px;font-size:11px;line-height:12px;transform:scaleX(1.12);">auto</span>
<span class="t" style="left:221px;transform-origin:left;top:692px;font-size:11px;line-height:12px;transform:scaleX(0.941);">HYUNDAI SANTA FE …</span>
<span class="t" style="right:1238px;transform-origin:right;top:692px;font-size:11px;line-height:12px;transform:scaleX(1.224);">5</span>
<span class="t" style="left:366px;transform-origin:left;top:692px;font-size:11px;line-height:12px;transform:scaleX(0.961);">SUV(Standard) - Inclusive GPS - Plus …</span>
<span class="t" style="left:566px;transform-origin:left;top:692px;font-size:11px;line-height:12px;transform:scaleX(0.99);">Flexible Car…</span>
<span class="t" style="left:641px;transform-origin:left;top:692px;font-size:11px;line-height:12px;transform:scaleX(1.024);">Tue</span>
<span class="t" style="left:676px;transform-origin:left;top:692px;font-size:11px;line-height:12px;transform:scaleX(1.035);">25/04/2017</span>
<span class="t" style="left:746px;transform-origin:left;top:692px;font-size:11px;line-height:12px;transform:scaleX(1.053);">12:00</span>
<span class="t" style="left:786px;transform-origin:left;top:692px;font-size:11px;line-height:12px;transform:scaleX(1.091);">Fri</span>
<span class="t" style="left:821px;transform-origin:left;top:692px;font-size:11px;line-height:12px;transform:scaleX(1.044);">05/05/2017</span>
<span class="t" style="left:891px;transform-origin:left;top:692px;font-size:11px;line-height:12px;transform:scaleX(1.053);">12:00</span>
<span class="t" style="right:648px;transform-origin:right;top:692px;font-size:11px;line-height:12px;transform:scaleX(1.061);">10</span>
<span class="t" style="left:956px;transform-origin:left;top:692px;font-size:11px;line-height:12px;transform:scaleX(1.01);">On Air…</span>
<span class="t" style="left:1006px;transform-origin:left;top:692px;font-size:11px;line-height:12px;transform:scaleX(1.01);">On Air…</span>
<span class="t" style="right:492px;transform-origin:right;top:692px;font-size:11px;line-height:12px;transform:scaleX(1.061);">561.90</span>
<span class="t" style="right:427px;transform-origin:right;top:692px;font-size:11px;line-height:12px;transform:scaleX(1.061);">561.90</span>
<span class="t" style="left:1176px;transform-origin:left;top:692px;font-size:11px;line-height:12px;transform:scaleX(1.016);">National</span>
<span class="t" style="left:1251px;transform-origin:left;top:692px;font-size:11px;line-height:12px;transform:scaleX(1.109);">yes</span>
<span class="t" style="left:1276px;transform-origin:left;top:692px;font-size:11px;line-height:12px;transform:scaleX(1.12);">auto</span>
<span class="t" style="left:221px;transform-origin:left;top:707px;font-size:11px;line-height:12px;transform:scaleX(0.91);">NISSAN ROGUE OR S…</span>
<span class="t" style="right:1238px;transform-origin:right;top:707px;font-size:11px;line-height:12px;transform:scaleX(1.224);">5</span>
<span class="t" style="left:366px;transform-origin:left;top:707px;font-size:11px;line-height:12px;transform:scaleX(0.99);">SUV(Intermediate) - Young Driver Pac…</span>
<span class="t" style="left:566px;transform-origin:left;top:707px;font-size:11px;line-height:12px;transform:scaleX(0.99);">Flexible Car…</span>
<span class="t" style="left:641px;transform-origin:left;top:707px;font-size:11px;line-height:12px;transform:scaleX(1.024);">Tue</span>
<span class="t" style="left:676px;transform-origin:left;top:707px;font-size:11px;line-height:12px;transform:scaleX(1.035);">25/04/2017</span>
<span class="t" style="left:746px;transform-origin:left;top:707px;font-size:11px;line-height:12px;transform:scaleX(1.053);">12:00</span>
<span class="t" style="left:786px;transform-origin:left;top:707px;font-size:11px;line-height:12px;transform:scaleX(1.091);">Fri</span>
<span class="t" style="left:821px;transform-origin:left;top:707px;font-size:11px;line-height:12px;transform:scaleX(1.044);">05/05/2017</span>
<span class="t" style="left:891px;transform-origin:left;top:707px;font-size:11px;line-height:12px;transform:scaleX(1.053);">12:00</span>
<span class="t" style="right:648px;transform-origin:right;top:707px;font-size:11px;line-height:12px;transform:scaleX(1.061);">10</span>
<span class="t" style="left:956px;transform-origin:left;top:707px;font-size:11px;line-height:12px;transform:scaleX(1.01);">On Air…</span>
<span class="t" style="left:1006px;transform-origin:left;top:707px;font-size:11px;line-height:12px;transform:scaleX(1.01);">On Air…</span>
<span class="t" style="right:492px;transform-origin:right;top:707px;font-size:11px;line-height:12px;transform:scaleX(1.061);">573.77</span>
<span class="t" style="right:427px;transform-origin:right;top:707px;font-size:11px;line-height:12px;transform:scaleX(1.061);">573.77</span>
<span class="t" style="left:1176px;transform-origin:left;top:707px;font-size:11px;line-height:12px;transform:scaleX(0.994);">Alamo</span>
<span class="t" style="left:1251px;transform-origin:left;top:707px;font-size:11px;line-height:12px;transform:scaleX(1.109);">yes</span>
<span class="t" style="left:1276px;transform-origin:left;top:707px;font-size:11px;line-height:12px;transform:scaleX(1.12);">auto</span>
<span class="t" style="left:221px;transform-origin:left;top:722px;font-size:11px;line-height:12px;transform:scaleX(0.941);">HYUNDAI SANTA FE …</span>
<span class="t" style="right:1238px;transform-origin:right;top:722px;font-size:11px;line-height:12px;transform:scaleX(1.224);">5</span>
<span class="t" style="left:366px;transform-origin:left;top:722px;font-size:11px;line-height:12px;transform:scaleX(0.943);">SUV(Standard) - Gold GPS</span>
<span class="t" style="left:566px;transform-origin:left;top:722px;font-size:11px;line-height:12px;transform:scaleX(0.99);">Flexible Car…</span>
<span class="t" style="left:641px;transform-origin:left;top:722px;font-size:11px;line-height:12px;transform:scaleX(1.024);">Tue</span>
<span class="t" style="left:676px;transform-origin:left;top:722px;font-size:11px;line-height:12px;transform:scaleX(1.035);">25/04/2017</span>
<span class="t" style="left:746px;transform-origin:left;top:722px;font-size:11px;line-height:12px;transform:scaleX(1.053);">12:00</span>
<span class="t" style="left:786px;transform-origin:left;top:722px;font-size:11px;line-height:12px;transform:scaleX(1.091);">Fri</span>
<span class="t" style="left:821px;transform-origin:left;top:722px;font-size:11px;line-height:12px;transform:scaleX(1.044);">05/05/2017</span>
<span class="t" style="left:891px;transform-origin:left;top:722px;font-size:11px;line-height:12px;transform:scaleX(1.053);">12:00</span>
<span class="t" style="right:648px;transform-origin:right;top:722px;font-size:11px;line-height:12px;transform:scaleX(1.061);">10</span>
<span class="t" style="left:956px;transform-origin:left;top:722px;font-size:11px;line-height:12px;transform:scaleX(1.01);">On Air…</span>
<span class="t" style="left:1006px;transform-origin:left;top:722px;font-size:11px;line-height:12px;transform:scaleX(1.01);">On Air…</span>
<span class="t" style="right:492px;transform-origin:right;top:722px;font-size:11px;line-height:12px;transform:scaleX(1.061);">574.76</span>
<span class="t" style="right:427px;transform-origin:right;top:722px;font-size:11px;line-height:12px;transform:scaleX(1.061);">574.76</span>
<span class="t" style="left:1176px;transform-origin:left;top:722px;font-size:11px;line-height:12px;transform:scaleX(0.994);">Alamo</span>
<span class="t" style="left:1251px;transform-origin:left;top:722px;font-size:11px;line-height:12px;transform:scaleX(1.109);">yes</span>
<span class="t" style="left:1276px;transform-origin:left;top:722px;font-size:11px;line-height:12px;transform:scaleX(1.12);">auto</span>
<span class="t" style="left:221px;transform-origin:left;top:737px;font-size:11px;line-height:12px;transform:scaleX(0.933);">CHEVY TAHOE OR SI…</span>
<span class="t" style="right:1238px;transform-origin:right;top:737px;font-size:11px;line-height:12px;transform:scaleX(1.224);">7</span>
<span class="t" style="left:366px;transform-origin:left;top:737px;font-size:11px;line-height:12px;transform:scaleX(0.954);">SUV(Full Size) - Inclusive - Plus Excess…</span>
<span class="t" style="left:566px;transform-origin:left;top:737px;font-size:11px;line-height:12px;transform:scaleX(0.99);">Flexible Car…</span>
<span class="t" style="left:641px;transform-origin:left;top:737px;font-size:11px;line-height:12px;transform:scaleX(1.024);">Tue</span>
<span class="t" style="left:676px;transform-origin:left;top:737px;font-size:11px;line-height:12px;transform:scaleX(1.035);">25/04/2017</span>
<span class="t" style="left:746px;transform-origin:left;top:737px;font-size:11px;line-height:12px;transform:scaleX(1.053);">12:00</span>
<span class="t" style="left:786px;transform-origin:left;top:737px;font-size:11px;line-height:12px;transform:scaleX(1.091);">Fri</span>
<span class="t" style="left:821px;transform-origin:left;top:737px;font-size:11px;line-height:12px;transform:scaleX(1.044);">05/05/2017</span>
<span class="t" style="left:891px;transform-origin:left;top:737px;font-size:11px;line-height:12px;transform:scaleX(1.053);">12:00</span>
<span class="t" style="right:648px;transform-origin:right;top:737px;font-size:11px;line-height:12px;transform:scaleX(1.061);">10</span>
<span class="t" style="left:956px;transform-origin:left;top:737px;font-size:11px;line-height:12px;transform:scaleX(1.01);">On Air…</span>
<span class="t" style="left:1006px;transform-origin:left;top:737px;font-size:11px;line-height:12px;transform:scaleX(1.01);">On Air…</span>
<span class="t" style="right:492px;transform-origin:right;top:737px;font-size:11px;line-height:12px;transform:scaleX(1.061);">577.68</span>
<span class="t" style="right:427px;transform-origin:right;top:737px;font-size:11px;line-height:12px;transform:scaleX(1.061);">577.68</span>
<span class="t" style="left:1176px;transform-origin:left;top:737px;font-size:11px;line-height:12px;transform:scaleX(0.994);">Alamo</span>
<span class="t" style="left:1251px;transform-origin:left;top:737px;font-size:11px;line-height:12px;transform:scaleX(1.109);">yes</span>
<span class="t" style="left:1276px;transform-origin:left;top:737px;font-size:11px;line-height:12px;transform:scaleX(1.12);">auto</span>
<span class="t" style="left:221px;transform-origin:left;top:752px;font-size:11px;line-height:12px;transform:scaleX(0.933);">CHEVY TAHOE OR SI…</span>
<span class="t" style="right:1238px;transform-origin:right;top:752px;font-size:11px;line-height:12px;transform:scaleX(1.224);">7</span>
<span class="t" style="left:366px;transform-origin:left;top:752px;font-size:11px;line-height:12px;transform:scaleX(0.942);">SUV(Full Size) - Gold</span>
<span class="t" style="left:566px;transform-origin:left;top:752px;font-size:11px;line-height:12px;transform:scaleX(0.99);">Flexible Car…</span>
<span class="t" style="left:641px;transform-origin:left;top:752px;font-size:11px;line-height:12px;transform:scaleX(1.024);">Tue</span>
<span class="t" style="left:676px;transform-origin:left;top:752px;font-size:11px;line-height:12px;transform:scaleX(1.035);">25/04/2017</span>
<span class="t" style="left:746px;transform-origin:left;top:752px;font-size:11px;line-height:12px;transform:scaleX(1.053);">12:00</span>
<span class="t" style="left:786px;transform-origin:left;top:752px;font-size:11px;line-height:12px;transform:scaleX(1.091);">Fri</span>
<span class="t" style="left:821px;transform-origin:left;top:752px;font-size:11px;line-height:12px;transform:scaleX(1.044);">05/05/2017</span>
<span class="t" style="left:891px;transform-origin:left;top:752px;font-size:11px;line-height:12px;transform:scaleX(1.053);">12:00</span>
<span class="t" style="right:648px;transform-origin:right;top:752px;font-size:11px;line-height:12px;transform:scaleX(1.061);">10</span>
<span class="t" style="left:956px;transform-origin:left;top:752px;font-size:11px;line-height:12px;transform:scaleX(1.01);">On Air…</span>
<span class="t" style="left:1006px;transform-origin:left;top:752px;font-size:11px;line-height:12px;transform:scaleX(1.01);">On Air…</span>
<span class="t" style="right:492px;transform-origin:right;top:752px;font-size:11px;line-height:12px;transform:scaleX(1.061);">580.79</span>
<span class="t" style="right:427px;transform-origin:right;top:752px;font-size:11px;line-height:12px;transform:scaleX(1.061);">580.79</span>
<span class="t" style="left:1176px;transform-origin:left;top:752px;font-size:11px;line-height:12px;transform:scaleX(0.994);">Alamo</span>
<span class="t" style="left:1251px;transform-origin:left;top:752px;font-size:11px;line-height:12px;transform:scaleX(1.109);">yes</span>
<span class="t" style="left:1276px;transform-origin:left;top:752px;font-size:11px;line-height:12px;transform:scaleX(1.12);">auto</span>
</div>
<div style="left:1573px;top:372px;width:16px;height:383px;background:repeating-conic-gradient(#fff 0% 25%,#d4d0c8 0% 50%) 0 0/2px 2px"></div>
<div class="rais" style="left:1573px;top:372px;width:16px;height:16px"><svg style="left:4px;top:5px" width="7" height="4" viewBox="0 0 7 4"><path d="M0 4H7L3.5 0Z" fill="#000"/></svg></div>
<div class="rais" style="left:1573px;top:739px;width:16px;height:16px"><svg style="left:4px;top:5px" width="7" height="4" viewBox="0 0 7 4"><path d="M0 0H7L3.5 4Z" fill="#000"/></svg></div>
<div class="rais" style="left:1573px;top:388px;width:16px;height:154px"></div>
<span class="t" style="left:221px;transform-origin:left;top:783px;font-size:11px;line-height:12px;transform:scaleX(1.012);">First portion: 9.8 sec, total search time: 14.4 sec</span>
<div class="rais" style="left:1560px;top:778px;width:23px;height:22px"></div>
<svg style="left:1565px;top:780px" width="12" height="16" viewBox="0 0 12 16"><text x="6" y="14" text-anchor="middle" font-family="Liberation Serif" font-weight="700" font-size="18" fill="#0850a0" stroke="#0850a0" stroke-width=".5">i</text></svg>
<div style="left:215px;top:805px;width:1378px;height:1px;background:#808080"></div>
<div style="left:215px;top:806px;width:53px;height:17px;border-right:1px solid #808080;"></div>
<span class="t" style="left:218px;transform-origin:left;top:808px;font-size:11px;line-height:12px;transform:scaleX(0.965);">Summary</span>
<div style="left:268px;top:806px;width:41px;height:17px;border-right:1px solid #808080;"></div>
<span class="t" style="left:270px;transform-origin:left;top:808px;font-size:11px;line-height:12px;">Search</span>
<div style="left:309px;top:806px;width:130px;height:17px;border-right:1px solid #808080;background:#c0ffc0;"></div>
<span class="t" style="left:311px;transform-origin:left;top:808px;font-size:11px;line-height:12px;transform:scaleX(0.991);">Acc 4A MCO; 05/04/2017</span>
<div style="left:439px;top:806px;width:113px;height:17px;border-right:1px solid #808080;background:#c0ffc0;"></div>
<span class="t" style="left:440px;transform-origin:left;top:808px;font-size:11px;line-height:12px;">Car MCO; 05/04/2017</span>
<div style="left:552px;top:806px;width:130px;height:17px;border-right:1px solid #808080;background:#c0c0ff;"></div>
<span class="t" style="left:554px;transform-origin:left;top:808px;font-size:11px;line-height:12px;">Acc 4A MCO; 25/04/2017</span>
<div style="left:683px;top:805px;width:113px;height:18px;background:#000080;border-radius:0 0 3px 3px"></div>
<span class="t" style="left:685px;transform-origin:left;top:808px;font-size:11px;line-height:12px;color:#fff;">Car MCO; 25/04/2017</span>
<div style="left:795px;top:806px;width:97px;height:17px;border-right:1px solid #808080;"></div>
<span class="t" style="left:799px;transform-origin:left;top:808px;font-size:11px;line-height:12px;transform:scaleX(0.951);">Financial Summary</span>
<span class="t" style="left:805px;transform-origin:left;top:832px;font-size:11px;line-height:12px;transform:scaleX(0.979);">User: 446 - Clark Silk</span>
<span class="t" style="left:915px;transform-origin:left;top:832px;font-size:11px;line-height:12px;transform:scaleX(0.993);">Retailer: &#x27;Ocean-Florida&#x27;</span>
<span class="t" style="left:1041px;transform-origin:left;top:832px;font-size:11px;line-height:12px;transform:scaleX(1.018);">Client: none</span>
<span class="t" style="left:1539px;transform-origin:left;top:832px;font-size:11px;line-height:12px;transform:scaleX(0.959);">15:03 GMT</span>
<div style="left:0px;top:858px;width:1600px;height:2px;background:#404040"></div>
</div></body></html>
